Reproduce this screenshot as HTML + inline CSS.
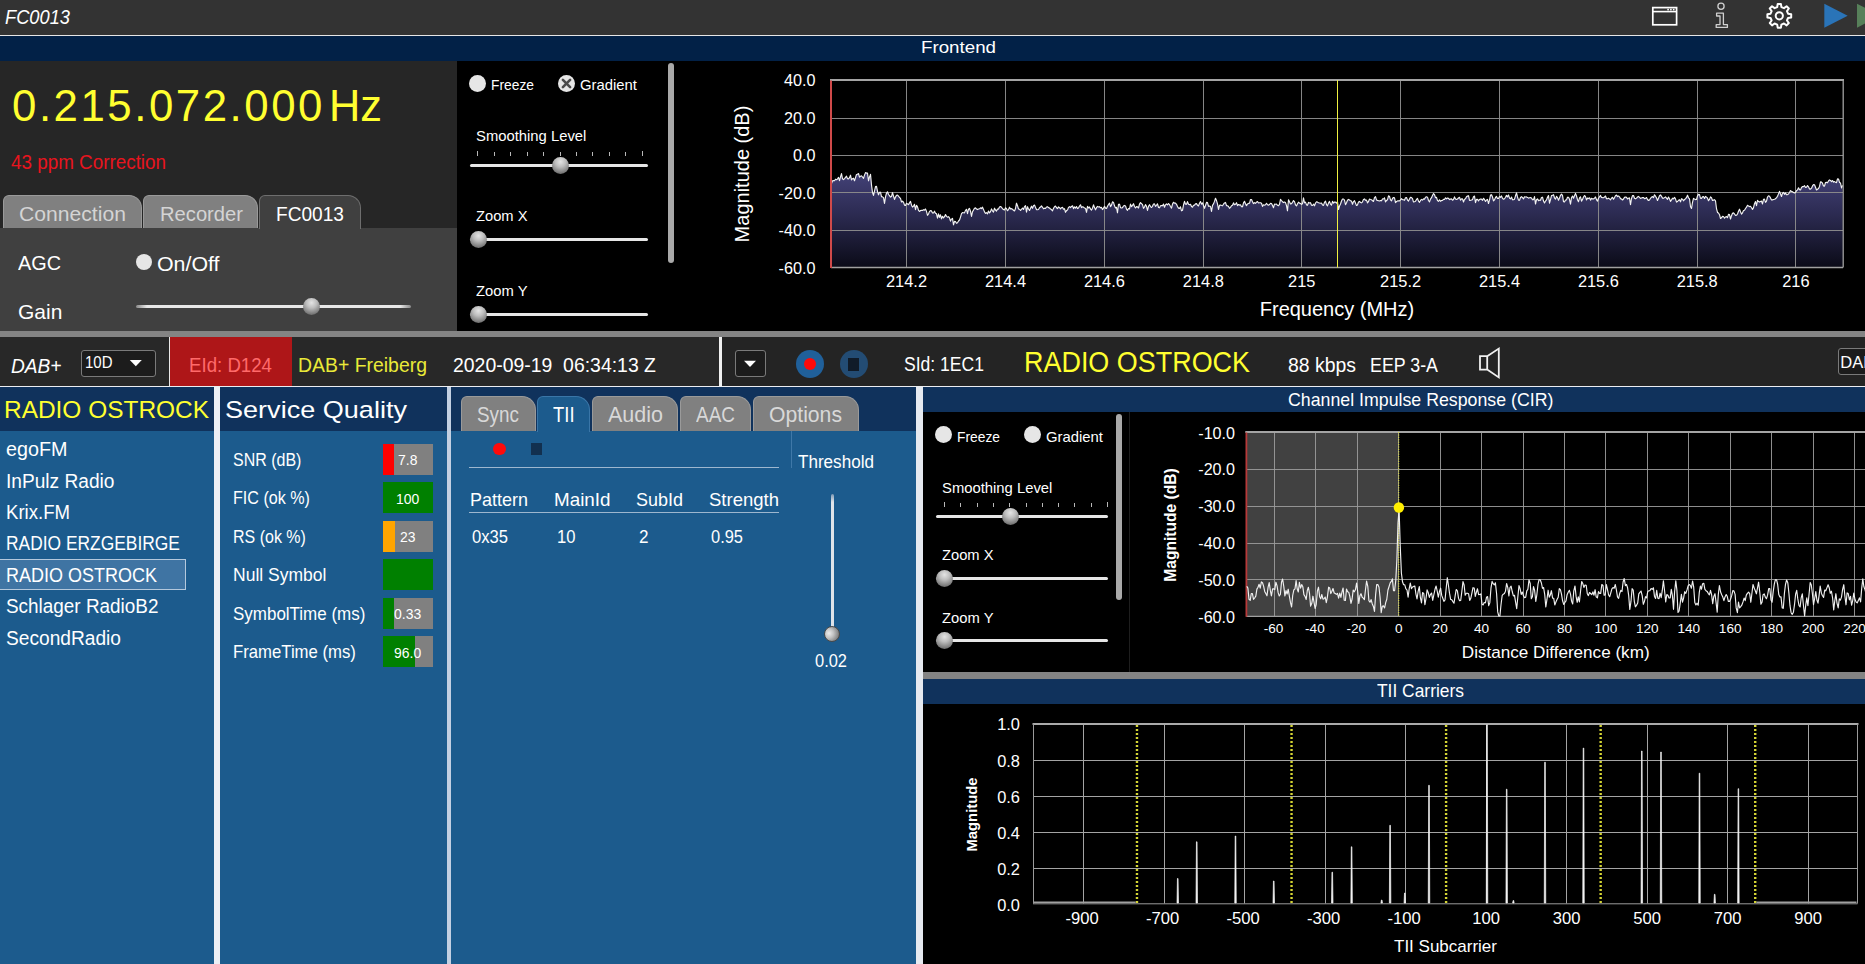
<!DOCTYPE html>
<html><head><meta charset="utf-8"><title>DAB</title>
<style>
html,body{margin:0;padding:0;background:#000;}
body{width:1865px;height:964px;overflow:hidden;position:relative;font-family:"Liberation Sans",sans-serif;}
#root{position:absolute;left:0;top:0;width:1865px;height:964px;overflow:hidden;background:#000;}
.t{position:absolute;white-space:pre;transform-origin:0 50%;display:block;}
.b{position:absolute;}
svg{position:absolute;left:0;top:0;}
svg text{font-family:"Liberation Sans",sans-serif;fill:#fff;}
.th{position:absolute;width:17px;height:17px;border-radius:50%;background:radial-gradient(circle at 50% 28%,#e4e4e4 0%,#bdbdbd 35%,#8a8a8a 65%,#4e4e4e 100%);}
.rd{position:absolute;width:17px;height:17px;border-radius:50%;background:#e6e6e6;}
</style></head><body><div id="root">
<div class="b" style="left:0.00px;top:0.00px;width:1865.00px;height:35.00px;background:#333333;"></div>
<div class="b" style="left:0.00px;top:35.00px;width:1865.00px;height:1.00px;background:#e6e6e6;"></div>
<div class="b" style="left:0.00px;top:36.00px;width:1865.00px;height:25.00px;background:#022147;"></div>
<span class="t" style="left:5.00px;top:8.47px;font-size:19.50px;line-height:19.50px;color:#fff;font-style:italic;transform:scaleX(0.9370);">FC0013</span>
<span class="t" style="left:920.50px;top:39.20px;font-size:17.00px;line-height:17.00px;color:#fff;transform:scaleX(1.1024);">Frontend</span>
<svg width="1865" height="36" viewBox="0 0 1865 36">
<g fill="none" stroke="#fff" stroke-width="1.7">
<rect x="1652.8" y="7.6" width="23.8" height="17.2"/>
<line x1="1652.7" y1="11.6" x2="1676.7" y2="11.6" stroke-width="1.6"/>
</g>
<g fill="#fff"><rect x="1667.3" y="8.8" width="1.6" height="1.6"/><rect x="1670.1" y="8.8" width="1.6" height="1.6"/><rect x="1672.9" y="8.8" width="1.6" height="1.6"/></g>
<g fill="none" stroke="#d0d0d0" stroke-width="1.3" stroke-linejoin="round">
<circle cx="1721" cy="6.3" r="3.1"/>
<path d="M1716.6 13.2 H1723.4 V24.6 H1727.4 V27.4 H1716.2 V24.6 H1720 V16 H1716.6 Z"/>
</g>
<g fill="none" stroke="#fff" stroke-width="2">
<path d="M1777.20 7.05 L1777.70 3.91 L1780.90 3.91 L1781.40 7.05 L1784.00 8.13 L1786.58 6.26 L1788.84 8.52 L1786.97 11.10 L1788.05 13.70 L1791.19 14.20 L1791.19 17.40 L1788.05 17.90 L1786.97 20.50 L1788.84 23.08 L1786.58 25.34 L1784.00 23.47 L1781.40 24.55 L1780.90 27.69 L1777.70 27.69 L1777.20 24.55 L1774.60 23.47 L1772.02 25.34 L1769.76 23.08 L1771.63 20.50 L1770.55 17.90 L1767.41 17.40 L1767.41 14.20 L1770.55 13.70 L1771.63 11.10 L1769.76 8.52 L1772.02 6.26 L1774.60 8.13 Z" stroke-linejoin="round"/>
<circle cx="1779.3" cy="15.8" r="3.6"/>
</g>
<polygon points="1824.3,3.7 1847.7,15.7 1824.3,27.7" fill="#2a74b8"/>
<polygon points="1857,3.7 1880.4,15.7 1857,27.7" fill="#57805a"/>
</svg>
<div class="b" style="left:0.00px;top:61.00px;width:457.00px;height:167.00px;background:#262626;"></div>
<div class="b" style="left:457.00px;top:61.00px;width:1408.00px;height:270.00px;background:#000;"></div>
<span class="t" style="left:11.50px;top:82.52px;font-size:45.00px;line-height:45.00px;color:#ffff30;letter-spacing:2.60px;transform:scaleX(0.9733);">0.215.072.000</span>
<span class="t" style="left:329.00px;top:82.52px;font-size:45.00px;line-height:45.00px;color:#ffff30;transform:scaleX(0.9637);">Hz</span>
<span class="t" style="left:11.00px;top:152.77px;font-size:19.50px;line-height:19.50px;color:#e8141e;transform:scaleX(0.9664);">43 ppm Correction</span>
<div class="b" style="left:3.0px;top:195.0px;width:139.0px;height:33.5px;background:#808080;border:1px solid #9a9a9a;border-bottom:none;box-sizing:border-box;border-radius:6px 13px 0 0;"></div>
<span class="t" style="left:19.40px;top:202.99px;font-size:21.00px;line-height:21.00px;color:#d4d4d4;transform:scaleX(1.0062);">Connection</span>
<div class="b" style="left:143.2px;top:195.0px;width:115.2px;height:33.5px;background:#808080;border:1px solid #9a9a9a;border-bottom:none;box-sizing:border-box;border-radius:6px 13px 0 0;"></div>
<span class="t" style="left:160.00px;top:202.99px;font-size:21.00px;line-height:21.00px;color:#d4d4d4;transform:scaleX(0.9610);">Recorder</span>
<div class="b" style="left:0.00px;top:228.00px;width:457.00px;height:103.00px;background:#404040;"></div>
<div class="b" style="left:259.4px;top:195.0px;width:101.6px;height:34.0px;background:#404040;border:1px solid #6e6e6e;border-bottom:none;box-sizing:border-box;border-radius:6px 13px 0 0;"></div>
<span class="t" style="left:276.00px;top:203.24px;font-size:21.00px;line-height:21.00px;color:#fff;transform:scaleX(0.9102);">FC0013</span>
<span class="t" style="left:18.00px;top:252.24px;font-size:21.00px;line-height:21.00px;color:#fff;transform:scaleX(0.9449);">AGC</span>
<div class="rd" style="left:135.5px;top:253.5px;width:16.5px;height:16.5px;"></div>
<span class="t" style="left:157.00px;top:253.24px;font-size:21.00px;line-height:21.00px;color:#fff;transform:scaleX(1.0166);">On/Off</span>
<span class="t" style="left:18.00px;top:300.74px;font-size:21.00px;line-height:21.00px;color:#fff;">Gain</span>
<div class="b" style="left:135.5px;top:305px;width:275px;height:2.5px;border-radius:2px;background:linear-gradient(90deg,#888,#e8e8e8 4%,#e8e8e8 96%,#888);"></div>
<div class="th" style="left:303.2px;top:297.7px;"></div>
<div class="rd" style="left:469.0px;top:75.0px;"></div>
<span class="t" style="left:490.50px;top:77.27px;font-size:15.00px;line-height:15.00px;color:#fff;transform:scaleX(0.9209);">Freeze</span>
<div class="rd" style="left:558.0px;top:75.0px;"></div>
<svg width="1865" height="964" style="pointer-events:none"><g stroke="#4a4a4a" stroke-width="2.6" stroke-linecap="round"><line x1="562.9" y1="79.9" x2="570.1" y2="87.1"/><line x1="562.9" y1="87.1" x2="570.1" y2="79.9"/></g></svg>
<span class="t" style="left:579.80px;top:77.27px;font-size:15.00px;line-height:15.00px;color:#fff;transform:scaleX(0.9906);">Gradient</span>
<span class="t" style="left:475.60px;top:128.37px;font-size:15.00px;line-height:15.00px;color:#fff;transform:scaleX(0.9879);">Smoothing Level</span>
<div class="b" style="left:477.20px;top:151.00px;width:1.00px;height:5.00px;background:#b8b8b8;"></div>
<div class="b" style="left:493.67px;top:152.00px;width:1.00px;height:4.00px;background:#b8b8b8;"></div>
<div class="b" style="left:510.14px;top:152.00px;width:1.00px;height:4.00px;background:#b8b8b8;"></div>
<div class="b" style="left:526.61px;top:152.00px;width:1.00px;height:4.00px;background:#b8b8b8;"></div>
<div class="b" style="left:543.08px;top:152.00px;width:1.00px;height:4.00px;background:#b8b8b8;"></div>
<div class="b" style="left:559.55px;top:152.00px;width:1.00px;height:4.00px;background:#b8b8b8;"></div>
<div class="b" style="left:576.02px;top:152.00px;width:1.00px;height:4.00px;background:#b8b8b8;"></div>
<div class="b" style="left:592.49px;top:152.00px;width:1.00px;height:4.00px;background:#b8b8b8;"></div>
<div class="b" style="left:608.96px;top:152.00px;width:1.00px;height:4.00px;background:#b8b8b8;"></div>
<div class="b" style="left:625.43px;top:152.00px;width:1.00px;height:4.00px;background:#b8b8b8;"></div>
<div class="b" style="left:641.90px;top:151.00px;width:1.00px;height:5.00px;background:#b8b8b8;"></div>
<div class="b" style="left:469.7px;top:163.5px;width:178.5px;height:3px;border-radius:2px;background:#e6e6e6;"></div>
<div class="th" style="left:551.5px;top:156.7px;"></div>
<span class="t" style="left:475.60px;top:208.27px;font-size:15.00px;line-height:15.00px;color:#fff;transform:scaleX(0.9806);">Zoom X</span>
<div class="b" style="left:469.7px;top:238.2px;width:178.5px;height:3px;border-radius:2px;background:#e6e6e6;"></div>
<div class="th" style="left:469.7px;top:231.4px;"></div>
<span class="t" style="left:475.60px;top:283.27px;font-size:15.00px;line-height:15.00px;color:#fff;transform:scaleX(0.9856);">Zoom Y</span>
<div class="b" style="left:469.7px;top:312.8px;width:178.5px;height:3px;border-radius:2px;background:#e6e6e6;"></div>
<div class="th" style="left:469.7px;top:306.0px;"></div>
<div class="b" style="left:668.2px;top:62.5px;width:6.2px;height:200px;border-radius:3px;background:#a9a9a9;"></div>
<div class="b" style="left:0.00px;top:331.00px;width:1865.00px;height:6.30px;background:#848484;"></div>
<div class="b" style="left:0.00px;top:337.30px;width:719.00px;height:48.70px;background:#282828;"></div>
<div class="b" style="left:719.00px;top:337.30px;width:3.00px;height:48.70px;background:#f0f0f0;"></div>
<div class="b" style="left:722.00px;top:337.30px;width:1143.00px;height:48.70px;background:#242424;"></div>
<div class="b" style="left:0.00px;top:386.00px;width:1865.00px;height:1.00px;background:#eceef2;"></div>
<span class="t" style="left:10.50px;top:355.53px;font-size:20.00px;line-height:20.00px;color:#fff;font-style:italic;transform:scaleX(0.9564);">DAB+</span>
<div class="b" style="left:81px;top:350px;width:74.7px;height:26.7px;box-sizing:border-box;border:1px solid #7a7a7a;border-radius:3px;background:#1c1c1c;"></div>
<span class="t" style="left:85.00px;top:355.18px;font-size:16.00px;line-height:16.00px;color:#fff;transform:scaleX(0.9369);">10D</span>
<div class="b" style="left:169.30px;top:337.30px;width:1.00px;height:48.70px;background:#e8e8e8;"></div>
<div class="b" style="left:170.30px;top:337.30px;width:121.70px;height:48.70px;background:#ae1618;"></div>
<span class="t" style="left:189.00px;top:354.53px;font-size:20.00px;line-height:20.00px;color:#ff6a6a;transform:scaleX(0.9330);">EId: D124</span>
<span class="t" style="left:298.00px;top:354.53px;font-size:20.00px;line-height:20.00px;color:#eaea38;transform:scaleX(0.9710);">DAB+ Freiberg</span>
<span class="t" style="left:452.50px;top:354.53px;font-size:20.00px;line-height:20.00px;color:#fff;transform:scaleX(0.9709);">2020-09-19  06:34:13 Z</span>
<div class="b" style="left:735px;top:350px;width:31px;height:26.7px;box-sizing:border-box;border:1px solid #7a7a7a;border-radius:3px;background:#1c1c1c;"></div>
<svg width="1865" height="964"><polygon points="129.8,360 141.8,360 135.8,366.3" fill="#fff"/><polygon points="744,360.7 756,360.7 750,367" fill="#fff"/></svg>
<div class="b" style="left:795.8px;top:350px;width:28.4px;height:28.4px;border-radius:50%;background:#20609a;"></div>
<div class="b" style="left:803.8px;top:358px;width:12.4px;height:12.4px;border-radius:50%;background:#ff0a0a;"></div>
<div class="b" style="left:839.6px;top:350px;width:28.4px;height:28.4px;border-radius:50%;background:#234c74;"></div>
<div class="b" style="left:848.20px;top:357.60px;width:11.20px;height:13.20px;background:#101b29;"></div>
<span class="t" style="left:904.00px;top:354.23px;font-size:20.00px;line-height:20.00px;color:#fff;transform:scaleX(0.8774);">SId: 1EC1</span>
<span class="t" style="left:1024.00px;top:346.59px;font-size:29.50px;line-height:29.50px;color:#ffff30;transform:scaleX(0.9132);">RADIO OSTROCK</span>
<span class="t" style="left:1288.00px;top:354.63px;font-size:20.00px;line-height:20.00px;color:#fff;transform:scaleX(0.9706);">88 kbps</span>
<span class="t" style="left:1370.00px;top:354.63px;font-size:20.00px;line-height:20.00px;color:#fff;transform:scaleX(0.8907);">EEP 3-A</span>
<svg width="1865" height="964"><path d="M1480 356.2 H1487.2 V369.6 H1480 Z M1487.2 356.2 L1498.8 348.6 V377.4 L1487.2 369.6" fill="none" stroke="#f0f0f0" stroke-width="1.8" stroke-linejoin="miter"/></svg>
<div class="b" style="left:1837.6px;top:348px;width:40px;height:26.7px;box-sizing:border-box;border:1px solid #7a7a7a;border-radius:3px;background:#1c1c1c;"></div>
<span class="t" style="left:1840.30px;top:353.54px;font-size:16.50px;line-height:16.50px;color:#fff;">DAB</span>
<div class="b" style="left:0.00px;top:387.00px;width:213.70px;height:577.00px;background:#1c5b8d;"></div>
<div class="b" style="left:0.00px;top:387.00px;width:213.70px;height:43.50px;background:#10325c;"></div>
<div class="b" style="left:213.80px;top:387.00px;width:6.50px;height:577.00px;background:#eceff5;"></div>
<span class="t" style="left:3.50px;top:397.53px;font-size:24.30px;line-height:24.30px;color:#ffff30;transform:scaleX(1.0055);">RADIO OSTROCK</span>
<span class="t" style="left:6.00px;top:440.13px;font-size:19.60px;line-height:19.60px;color:#fff;transform:scaleX(1.0083);">egoFM</span>
<span class="t" style="left:6.00px;top:471.58px;font-size:19.60px;line-height:19.60px;color:#fff;transform:scaleX(0.9764);">InPulz Radio</span>
<span class="t" style="left:6.00px;top:503.03px;font-size:19.60px;line-height:19.60px;color:#fff;transform:scaleX(0.9482);">Krix.FM</span>
<span class="t" style="left:6.00px;top:534.48px;font-size:19.60px;line-height:19.60px;color:#fff;transform:scaleX(0.8876);">RADIO ERZGEBIRGE</span>
<div class="b" style="left:-1px;top:558.7px;width:186.5px;height:31px;box-sizing:border-box;border:1px solid #b4c8dc;background:#3f74a3;"></div>
<span class="t" style="left:6.00px;top:565.93px;font-size:19.60px;line-height:19.60px;color:#fff;transform:scaleX(0.9183);">RADIO OSTROCK</span>
<span class="t" style="left:6.00px;top:597.38px;font-size:19.60px;line-height:19.60px;color:#fff;transform:scaleX(0.9653);">Schlager RadioB2</span>
<span class="t" style="left:6.00px;top:628.83px;font-size:19.60px;line-height:19.60px;color:#fff;transform:scaleX(0.9772);">SecondRadio</span>
<div class="b" style="left:220.00px;top:387.00px;width:227.00px;height:577.00px;background:#1c5b8d;"></div>
<div class="b" style="left:220.00px;top:387.00px;width:227.00px;height:43.50px;background:#10325c;"></div>
<div class="b" style="left:447.00px;top:387.00px;width:4.30px;height:577.00px;background:#c3d0e2;"></div>
<span class="t" style="left:225.00px;top:397.53px;font-size:24.30px;line-height:24.30px;color:#fff;transform:scaleX(1.1137);">Service Quality</span>
<span class="t" style="left:233.00px;top:451.60px;font-size:17.80px;line-height:17.80px;color:#fff;transform:scaleX(0.8995);">SNR (dB)</span>
<div class="b" style="left:383.00px;top:443.80px;width:50.00px;height:31.00px;background:#808080;"></div>
<div class="b" style="left:383.00px;top:443.80px;width:11.00px;height:31.00px;background:#ff0000;"></div>
<span class="t" style="left:398.30px;top:452.47px;font-size:15.00px;line-height:15.00px;color:#fff;transform:scaleX(0.9300);">7.8</span>
<span class="t" style="left:233.00px;top:490.10px;font-size:17.80px;line-height:17.80px;color:#fff;transform:scaleX(0.9055);">FIC (ok %)</span>
<div class="b" style="left:383.00px;top:482.25px;width:50.00px;height:31.00px;background:#808080;"></div>
<div class="b" style="left:383.00px;top:482.25px;width:50.00px;height:31.00px;background:#008000;"></div>
<span class="t" style="left:396.36px;top:490.97px;font-size:15.00px;line-height:15.00px;color:#fff;transform:scaleX(0.9300);">100</span>
<span class="t" style="left:233.00px;top:528.60px;font-size:17.80px;line-height:17.80px;color:#fff;transform:scaleX(0.9002);">RS (ok %)</span>
<div class="b" style="left:383.00px;top:520.70px;width:50.00px;height:31.00px;background:#808080;"></div>
<div class="b" style="left:383.00px;top:520.70px;width:12.00px;height:31.00px;background:#ffa500;"></div>
<span class="t" style="left:400.24px;top:529.47px;font-size:15.00px;line-height:15.00px;color:#fff;transform:scaleX(0.9300);">23</span>
<span class="t" style="left:233.00px;top:567.10px;font-size:17.80px;line-height:17.80px;color:#fff;transform:scaleX(0.9846);">Null Symbol</span>
<div class="b" style="left:383.00px;top:559.15px;width:50.00px;height:31.00px;background:#808080;"></div>
<div class="b" style="left:383.00px;top:559.15px;width:50.00px;height:31.00px;background:#008000;"></div>
<span class="t" style="left:233.00px;top:605.60px;font-size:17.80px;line-height:17.80px;color:#fff;transform:scaleX(0.9548);">SymbolTime (ms)</span>
<div class="b" style="left:383.00px;top:597.60px;width:50.00px;height:31.00px;background:#808080;"></div>
<div class="b" style="left:383.00px;top:597.60px;width:11.00px;height:31.00px;background:#008000;"></div>
<span class="t" style="left:394.42px;top:606.47px;font-size:15.00px;line-height:15.00px;color:#fff;transform:scaleX(0.9300);">0.33</span>
<span class="t" style="left:233.00px;top:644.10px;font-size:17.80px;line-height:17.80px;color:#fff;transform:scaleX(0.9401);">FrameTime (ms)</span>
<div class="b" style="left:383.00px;top:636.05px;width:50.00px;height:31.00px;background:#808080;"></div>
<div class="b" style="left:383.00px;top:636.05px;width:32.00px;height:31.00px;background:#008000;"></div>
<span class="t" style="left:394.42px;top:644.97px;font-size:15.00px;line-height:15.00px;color:#fff;transform:scaleX(0.9300);">96.0</span>
<div class="b" style="left:451.30px;top:387.00px;width:464.70px;height:577.00px;background:#1c5b8d;"></div>
<div class="b" style="left:451.30px;top:387.00px;width:464.70px;height:44.00px;background:#10325c;"></div>
<div class="b" style="left:916.00px;top:387.00px;width:7.00px;height:577.00px;background:#e6eaf0;"></div>
<div class="b" style="left:461.0px;top:396px;width:74.5px;height:35.0px;background:#808080;border:1px solid #9a9a9a;border-bottom:none;box-sizing:border-box;border-radius:6px 14px 0 0;"></div>
<span class="t" style="left:477.00px;top:404.35px;font-size:21.80px;line-height:21.80px;color:#d8d8d8;transform:scaleX(0.8666);">Sync</span>
<div class="b" style="left:591.5px;top:396px;width:86.0px;height:35.0px;background:#808080;border:1px solid #9a9a9a;border-bottom:none;box-sizing:border-box;border-radius:6px 14px 0 0;"></div>
<span class="t" style="left:607.50px;top:404.35px;font-size:21.80px;line-height:21.80px;color:#d8d8d8;transform:scaleX(0.9864);">Audio</span>
<div class="b" style="left:679.5px;top:396px;width:71.0px;height:35.0px;background:#808080;border:1px solid #9a9a9a;border-bottom:none;box-sizing:border-box;border-radius:6px 14px 0 0;"></div>
<span class="t" style="left:696.00px;top:404.35px;font-size:21.80px;line-height:21.80px;color:#d8d8d8;transform:scaleX(0.8700);">AAC</span>
<div class="b" style="left:752.5px;top:396px;width:106.2px;height:35.0px;background:#808080;border:1px solid #9a9a9a;border-bottom:none;box-sizing:border-box;border-radius:6px 14px 0 0;"></div>
<span class="t" style="left:769.00px;top:404.35px;font-size:21.80px;line-height:21.80px;color:#d8d8d8;transform:scaleX(0.9716);">Options</span>
<div class="b" style="left:537.0px;top:396px;width:53.0px;height:35.5px;background:#1c5b8d;border:1px solid #3a76a8;border-bottom:none;box-sizing:border-box;border-radius:6px 14px 0 0;"></div>
<span class="t" style="left:552.50px;top:404.35px;font-size:21.80px;line-height:21.80px;color:#fff;transform:scaleX(0.8455);">TII</span>
<div class="b" style="left:493.3px;top:442.6px;width:12.4px;height:12.4px;border-radius:50%;background:#ff0a0a;"></div>
<div class="b" style="left:531.20px;top:443.00px;width:10.80px;height:12.00px;background:#12304f;"></div>
<div class="b" style="left:469.00px;top:467.00px;width:310.00px;height:1.00px;background:#9db7cf;"></div>
<div class="b" style="left:790.50px;top:431.00px;width:1.00px;height:37.00px;background:#3f78a8;"></div>
<span class="t" style="left:798.00px;top:453.06px;font-size:18.30px;line-height:18.30px;color:#fff;transform:scaleX(0.9340);">Threshold</span>
<span class="t" style="left:470.00px;top:491.41px;font-size:18.60px;line-height:18.60px;color:#fff;transform:scaleX(0.9671);">Pattern</span>
<span class="t" style="left:554.00px;top:491.41px;font-size:18.60px;line-height:18.60px;color:#fff;transform:scaleX(1.0120);">MainId</span>
<span class="t" style="left:636.00px;top:491.41px;font-size:18.60px;line-height:18.60px;color:#fff;transform:scaleX(0.9669);">SubId</span>
<span class="t" style="left:709.00px;top:491.41px;font-size:18.60px;line-height:18.60px;color:#fff;transform:scaleX(0.9955);">Strength</span>
<div class="b" style="left:469.00px;top:512.20px;width:310.00px;height:1.00px;background:#9db7cf;"></div>
<span class="t" style="left:472.00px;top:528.90px;font-size:17.60px;line-height:17.60px;color:#fff;transform:scaleX(0.9431);">0x35</span>
<span class="t" style="left:557.00px;top:528.90px;font-size:17.60px;line-height:17.60px;color:#fff;transform:scaleX(0.9448);">10</span>
<span class="t" style="left:639.00px;top:528.90px;font-size:17.60px;line-height:17.60px;color:#fff;transform:scaleX(0.9704);">2</span>
<span class="t" style="left:711.00px;top:528.90px;font-size:17.60px;line-height:17.60px;color:#fff;transform:scaleX(0.9340);">0.95</span>
<div class="b" style="left:831.3px;top:493.5px;width:2.6px;height:135px;border-radius:2px;background:linear-gradient(180deg,#7f9ab5,#dfe3e8 6%,#dfe3e8);"></div>
<div class="th" style="left:824.3px;top:626px;width:16px;height:16px;box-sizing:border-box;border:1px solid #4a4a4a;background:radial-gradient(circle at 28% 45%,#ececec 0%,#c4c4c4 35%,#8c8c8c 70%,#5a5a5a 100%);"></div>
<span class="t" style="left:815.30px;top:652.90px;font-size:17.60px;line-height:17.60px;color:#fff;transform:scaleX(0.9340);">0.02</span>
<div class="b" style="left:923.00px;top:387.00px;width:942.00px;height:25.00px;background:#10325c;"></div>
<div class="b" style="left:923.00px;top:412.00px;width:942.00px;height:260.50px;background:#000;"></div>
<span class="t" style="left:1287.55px;top:391.01px;font-size:18.40px;line-height:18.40px;color:#fff;transform:scaleX(0.9651);">Channel Impulse Response (CIR)</span>
<div class="rd" style="left:935.3px;top:426.4px;"></div>
<span class="t" style="left:956.80px;top:428.67px;font-size:15.00px;line-height:15.00px;color:#fff;transform:scaleX(0.9209);">Freeze</span>
<div class="rd" style="left:1024.3px;top:426.4px;"></div>
<span class="t" style="left:1046.10px;top:428.67px;font-size:15.00px;line-height:15.00px;color:#fff;transform:scaleX(0.9906);">Gradient</span>
<span class="t" style="left:941.90px;top:479.77px;font-size:15.00px;line-height:15.00px;color:#fff;transform:scaleX(0.9879);">Smoothing Level</span>
<div class="b" style="left:944.00px;top:502.40px;width:1.00px;height:5.00px;background:#b8b8b8;"></div>
<div class="b" style="left:960.30px;top:503.40px;width:1.00px;height:4.00px;background:#b8b8b8;"></div>
<div class="b" style="left:976.60px;top:503.40px;width:1.00px;height:4.00px;background:#b8b8b8;"></div>
<div class="b" style="left:992.90px;top:503.40px;width:1.00px;height:4.00px;background:#b8b8b8;"></div>
<div class="b" style="left:1009.20px;top:503.40px;width:1.00px;height:4.00px;background:#b8b8b8;"></div>
<div class="b" style="left:1025.50px;top:503.40px;width:1.00px;height:4.00px;background:#b8b8b8;"></div>
<div class="b" style="left:1041.80px;top:503.40px;width:1.00px;height:4.00px;background:#b8b8b8;"></div>
<div class="b" style="left:1058.10px;top:503.40px;width:1.00px;height:4.00px;background:#b8b8b8;"></div>
<div class="b" style="left:1074.40px;top:503.40px;width:1.00px;height:4.00px;background:#b8b8b8;"></div>
<div class="b" style="left:1090.70px;top:503.40px;width:1.00px;height:4.00px;background:#b8b8b8;"></div>
<div class="b" style="left:1107.00px;top:502.40px;width:1.00px;height:5.00px;background:#b8b8b8;"></div>
<div class="b" style="left:936.0px;top:514.9px;width:172.2px;height:3px;border-radius:2px;background:#e6e6e6;"></div>
<div class="th" style="left:1001.5px;top:508.1px;"></div>
<span class="t" style="left:941.90px;top:547.27px;font-size:15.00px;line-height:15.00px;color:#fff;transform:scaleX(0.9806);">Zoom X</span>
<div class="b" style="left:936.0px;top:577.2px;width:172.2px;height:3px;border-radius:2px;background:#e6e6e6;"></div>
<div class="th" style="left:936.0px;top:570.4px;"></div>
<span class="t" style="left:941.90px;top:609.67px;font-size:15.00px;line-height:15.00px;color:#fff;transform:scaleX(0.9856);">Zoom Y</span>
<div class="b" style="left:936.0px;top:639.2px;width:172.2px;height:3px;border-radius:2px;background:#e6e6e6;"></div>
<div class="th" style="left:936.0px;top:632.4px;"></div>
<div class="b" style="left:1115.8px;top:414px;width:6.2px;height:186px;border-radius:3px;background:#a9a9a9;"></div>
<div class="b" style="left:1129.00px;top:412.00px;width:1.00px;height:260.00px;background:#1e1e1e;"></div>
<div class="b" style="left:923.00px;top:672.30px;width:942.00px;height:6.40px;background:#848484;"></div>
<div class="b" style="left:923.00px;top:678.70px;width:942.00px;height:25.00px;background:#10325c;"></div>
<div class="b" style="left:923.00px;top:703.70px;width:942.00px;height:261.00px;background:#000;"></div>
<span class="t" style="left:1376.80px;top:681.51px;font-size:18.40px;line-height:18.40px;color:#fff;transform:scaleX(0.9457);">TII Carriers</span>
<svg width="1865" height="964" viewBox="0 0 1865 964" shape-rendering="auto">
<defs><linearGradient id="fg" x1="0" y1="0" x2="0" y2="1" gradientUnits="userSpaceOnUse"><stop offset="0" stop-color="#000"/></linearGradient><linearGradient id="sp" gradientUnits="userSpaceOnUse" x1="0" y1="170" x2="0" y2="267"><stop offset="0" stop-color="#45437a"/><stop offset="0.45" stop-color="#2c2b52"/><stop offset="1" stop-color="#0b0b18"/></linearGradient><clipPath id="c2"><rect x="1246" y="432" width="640" height="185"/></clipPath></defs>
<polygon points="831.0,267.5 831.5,183.5 832.5,180.9 833.5,180.6 834.5,180.7 835.5,179.2 836.5,179.7 837.5,179.0 838.5,177.4 839.5,180.7 840.5,176.9 841.5,173.6 842.5,178.8 843.5,179.6 844.5,178.6 845.5,177.3 846.5,176.2 847.5,178.6 848.5,178.9 849.5,177.7 850.5,175.2 851.5,179.9 852.5,178.7 853.5,178.2 854.5,180.7 855.5,177.6 856.5,174.5 857.5,174.3 858.5,173.5 859.5,177.1 860.5,176.2 861.5,175.8 862.5,177.0 863.5,178.3 864.5,175.1 865.5,172.6 866.5,173.1 867.5,173.1 868.5,180.8 869.5,176.9 870.5,174.4 871.5,185.1 872.5,192.5 873.5,195.4 874.5,191.1 875.5,186.6 876.5,186.3 877.5,191.3 878.5,194.8 879.5,192.3 880.5,192.2 881.5,196.7 882.5,196.9 883.5,197.6 884.5,203.4 885.5,196.9 886.5,193.2 887.5,191.8 888.5,194.5 889.5,195.7 890.5,197.1 891.5,196.6 892.5,192.5 893.5,196.1 894.5,199.4 895.5,197.1 896.5,195.3 897.5,195.1 898.5,196.1 899.5,197.5 900.5,198.4 901.5,202.0 902.5,201.2 903.5,202.1 904.5,205.1 905.5,205.5 906.5,203.3 907.5,203.9 908.5,204.7 909.5,202.9 910.5,201.4 911.5,205.2 912.5,207.1 913.5,206.1 914.5,204.3 915.5,209.6 916.5,205.3 917.5,206.9 918.5,210.3 919.5,211.5 920.5,210.5 921.5,210.3 922.5,210.5 923.5,209.7 924.5,210.1 925.5,209.0 926.5,211.4 927.5,215.3 928.5,214.0 929.5,211.4 930.5,210.6 931.5,210.9 932.5,213.0 933.5,213.0 934.5,211.2 935.5,213.2 936.5,213.8 937.5,218.2 938.5,213.9 939.5,217.3 940.5,214.8 941.5,218.8 942.5,216.3 943.5,217.9 944.5,216.7 945.5,214.6 946.5,216.4 947.5,217.1 948.5,216.7 949.5,217.9 950.5,221.1 951.5,219.1 952.5,218.4 953.5,224.8 954.5,221.3 955.5,221.6 956.5,223.3 957.5,222.7 958.5,221.0 959.5,220.0 960.5,217.1 961.5,213.7 962.5,212.6 963.5,212.7 964.5,212.9 965.5,210.4 966.5,209.3 967.5,213.7 968.5,209.2 969.5,208.4 970.5,211.2 971.5,216.5 972.5,211.7 973.5,210.1 974.5,208.2 975.5,207.9 976.5,209.1 977.5,209.6 978.5,209.0 979.5,208.8 980.5,207.8 981.5,208.6 982.5,207.2 983.5,209.4 984.5,211.9 985.5,213.4 986.5,212.7 987.5,213.8 988.5,211.0 989.5,212.9 990.5,211.6 991.5,208.9 992.5,210.8 993.5,212.1 994.5,208.2 995.5,210.0 996.5,211.1 997.5,209.0 998.5,209.1 999.5,207.1 1000.5,206.5 1001.5,207.2 1002.5,208.8 1003.5,209.4 1004.5,210.0 1005.5,207.8 1006.5,208.7 1007.5,210.7 1008.5,209.6 1009.5,207.2 1010.5,208.9 1011.5,208.6 1012.5,209.3 1013.5,210.2 1014.5,211.0 1015.5,208.5 1016.5,203.2 1017.5,205.7 1018.5,209.0 1019.5,209.2 1020.5,210.5 1021.5,209.3 1022.5,208.0 1023.5,209.5 1024.5,206.6 1025.5,205.7 1026.5,212.2 1027.5,206.7 1028.5,209.0 1029.5,210.5 1030.5,208.2 1031.5,206.2 1032.5,208.3 1033.5,205.7 1034.5,205.0 1035.5,207.4 1036.5,209.6 1037.5,209.7 1038.5,209.5 1039.5,207.8 1040.5,207.0 1041.5,205.9 1042.5,207.3 1043.5,208.8 1044.5,208.2 1045.5,208.4 1046.5,207.0 1047.5,206.7 1048.5,207.6 1049.5,208.0 1050.5,209.0 1051.5,209.6 1052.5,210.9 1053.5,208.4 1054.5,206.8 1055.5,206.0 1056.5,207.7 1057.5,208.6 1058.5,206.9 1059.5,207.7 1060.5,208.9 1061.5,207.7 1062.5,207.3 1063.5,209.2 1064.5,208.7 1065.5,212.3 1066.5,210.6 1067.5,210.1 1068.5,207.4 1069.5,206.7 1070.5,207.7 1071.5,206.4 1072.5,205.8 1073.5,208.6 1074.5,206.9 1075.5,208.1 1076.5,206.6 1077.5,208.6 1078.5,208.1 1079.5,206.1 1080.5,204.8 1081.5,207.6 1082.5,206.8 1083.5,207.1 1084.5,208.0 1085.5,208.2 1086.5,212.3 1087.5,206.4 1088.5,208.0 1089.5,207.0 1090.5,209.0 1091.5,210.1 1092.5,208.2 1093.5,204.8 1094.5,207.6 1095.5,209.8 1096.5,207.7 1097.5,206.4 1098.5,207.0 1099.5,206.7 1100.5,207.8 1101.5,207.4 1102.5,209.6 1103.5,208.2 1104.5,206.3 1105.5,208.1 1106.5,208.5 1107.5,206.2 1108.5,204.5 1109.5,203.2 1110.5,206.7 1111.5,205.1 1112.5,201.8 1113.5,202.4 1114.5,205.8 1115.5,207.9 1116.5,207.3 1117.5,212.8 1118.5,204.3 1119.5,204.2 1120.5,207.7 1121.5,208.0 1122.5,207.6 1123.5,206.0 1124.5,205.4 1125.5,205.9 1126.5,209.1 1127.5,210.3 1128.5,208.5 1129.5,209.0 1130.5,204.1 1131.5,206.6 1132.5,205.4 1133.5,203.7 1134.5,206.5 1135.5,208.0 1136.5,206.6 1137.5,206.9 1138.5,208.0 1139.5,204.1 1140.5,202.6 1141.5,203.6 1142.5,204.6 1143.5,208.3 1144.5,207.0 1145.5,204.6 1146.5,206.3 1147.5,210.4 1148.5,206.3 1149.5,204.7 1150.5,206.6 1151.5,207.5 1152.5,206.3 1153.5,204.0 1154.5,203.9 1155.5,206.4 1156.5,205.3 1157.5,203.8 1158.5,207.5 1159.5,207.8 1160.5,205.8 1161.5,205.5 1162.5,205.8 1163.5,204.1 1164.5,207.2 1165.5,204.8 1166.5,203.8 1167.5,204.8 1168.5,203.5 1169.5,204.7 1170.5,206.5 1171.5,208.1 1172.5,204.1 1173.5,202.3 1174.5,203.1 1175.5,203.1 1176.5,204.3 1177.5,206.5 1178.5,208.1 1179.5,208.5 1180.5,206.8 1181.5,210.8 1182.5,210.3 1183.5,205.0 1184.5,201.4 1185.5,204.1 1186.5,204.3 1187.5,201.6 1188.5,204.2 1189.5,204.7 1190.5,204.3 1191.5,206.6 1192.5,207.2 1193.5,205.2 1194.5,205.1 1195.5,203.9 1196.5,203.6 1197.5,205.3 1198.5,205.9 1199.5,203.3 1200.5,201.5 1201.5,204.1 1202.5,202.9 1203.5,205.5 1204.5,208.3 1205.5,205.5 1206.5,202.3 1207.5,202.6 1208.5,206.3 1209.5,206.0 1210.5,206.5 1211.5,211.5 1212.5,205.3 1213.5,203.9 1214.5,201.4 1215.5,198.3 1216.5,200.6 1217.5,203.9 1218.5,209.5 1219.5,205.4 1220.5,205.0 1221.5,205.5 1222.5,205.8 1223.5,204.2 1224.5,202.9 1225.5,202.4 1226.5,205.6 1227.5,205.7 1228.5,206.5 1229.5,208.3 1230.5,207.4 1231.5,205.7 1232.5,205.2 1233.5,202.9 1234.5,204.7 1235.5,204.2 1236.5,202.7 1237.5,205.6 1238.5,204.5 1239.5,205.1 1240.5,204.8 1241.5,206.7 1242.5,206.8 1243.5,202.9 1244.5,201.3 1245.5,203.8 1246.5,205.6 1247.5,203.9 1248.5,203.4 1249.5,203.3 1250.5,199.5 1251.5,199.5 1252.5,201.8 1253.5,203.6 1254.5,202.6 1255.5,203.4 1256.5,202.2 1257.5,201.5 1258.5,203.0 1259.5,202.8 1260.5,202.7 1261.5,203.3 1262.5,206.4 1263.5,204.8 1264.5,205.2 1265.5,204.8 1266.5,203.3 1267.5,204.8 1268.5,205.2 1269.5,204.5 1270.5,203.3 1271.5,203.5 1272.5,205.4 1273.5,207.7 1274.5,204.1 1275.5,204.2 1276.5,204.0 1277.5,205.3 1278.5,205.7 1279.5,204.3 1280.5,199.3 1281.5,200.6 1282.5,201.7 1283.5,202.6 1284.5,202.1 1285.5,202.6 1286.5,205.6 1287.5,210.8 1288.5,199.8 1289.5,201.7 1290.5,204.0 1291.5,203.6 1292.5,202.3 1293.5,200.6 1294.5,201.6 1295.5,204.9 1296.5,205.9 1297.5,203.8 1298.5,202.2 1299.5,203.1 1300.5,203.5 1301.5,204.4 1302.5,203.7 1303.5,197.9 1304.5,202.8 1305.5,202.1 1306.5,204.9 1307.5,205.3 1308.5,202.4 1309.5,203.0 1310.5,202.7 1311.5,205.3 1312.5,205.5 1313.5,204.2 1314.5,205.8 1315.5,203.0 1316.5,201.8 1317.5,202.1 1318.5,202.8 1319.5,203.0 1320.5,203.2 1321.5,203.0 1322.5,205.0 1323.5,205.4 1324.5,202.4 1325.5,201.2 1326.5,204.6 1327.5,205.8 1328.5,203.1 1329.5,201.4 1330.5,204.1 1331.5,205.2 1332.5,201.4 1333.5,203.1 1334.5,202.0 1335.5,202.1 1336.5,203.1 1337.5,201.7 1338.5,209.5 1339.5,206.0 1340.5,204.0 1341.5,201.0 1342.5,199.0 1343.5,199.0 1344.5,200.2 1345.5,204.6 1346.5,202.8 1347.5,200.2 1348.5,199.4 1349.5,200.0 1350.5,200.7 1351.5,201.1 1352.5,204.2 1353.5,201.6 1354.5,200.7 1355.5,203.1 1356.5,205.5 1357.5,204.9 1358.5,202.0 1359.5,201.4 1360.5,202.5 1361.5,202.8 1362.5,201.8 1363.5,199.4 1364.5,198.9 1365.5,200.3 1366.5,200.1 1367.5,202.9 1368.5,201.4 1369.5,199.1 1370.5,199.5 1371.5,199.7 1372.5,200.8 1373.5,201.4 1374.5,197.6 1375.5,196.7 1376.5,199.9 1377.5,200.4 1378.5,200.7 1379.5,201.0 1380.5,200.5 1381.5,200.8 1382.5,198.9 1383.5,199.0 1384.5,197.8 1385.5,201.9 1386.5,200.4 1387.5,199.8 1388.5,195.8 1389.5,196.5 1390.5,199.8 1391.5,200.8 1392.5,198.5 1393.5,197.5 1394.5,197.9 1395.5,202.6 1396.5,201.5 1397.5,200.9 1398.5,200.8 1399.5,200.9 1400.5,199.9 1401.5,198.7 1402.5,199.6 1403.5,199.8 1404.5,200.3 1405.5,197.7 1406.5,197.5 1407.5,200.1 1408.5,201.1 1409.5,199.1 1410.5,197.3 1411.5,197.6 1412.5,198.7 1413.5,202.0 1414.5,201.8 1415.5,201.3 1416.5,199.4 1417.5,198.4 1418.5,201.1 1419.5,202.3 1420.5,200.4 1421.5,199.4 1422.5,200.1 1423.5,198.9 1424.5,199.2 1425.5,197.2 1426.5,196.8 1427.5,197.2 1428.5,200.5 1429.5,201.8 1430.5,199.1 1431.5,197.7 1432.5,195.5 1433.5,193.6 1434.5,194.7 1435.5,197.6 1436.5,197.4 1437.5,200.6 1438.5,201.4 1439.5,199.8 1440.5,201.3 1441.5,200.5 1442.5,200.4 1443.5,199.3 1444.5,199.5 1445.5,197.8 1446.5,198.8 1447.5,198.0 1448.5,198.4 1449.5,199.6 1450.5,199.1 1451.5,198.9 1452.5,200.2 1453.5,199.5 1454.5,196.9 1455.5,199.0 1456.5,199.5 1457.5,199.0 1458.5,198.0 1459.5,197.3 1460.5,200.1 1461.5,198.9 1462.5,198.9 1463.5,202.0 1464.5,199.3 1465.5,198.8 1466.5,196.7 1467.5,196.1 1468.5,195.7 1469.5,200.3 1470.5,200.3 1471.5,200.0 1472.5,199.6 1473.5,196.7 1474.5,196.1 1475.5,202.6 1476.5,199.4 1477.5,199.4 1478.5,200.9 1479.5,199.5 1480.5,199.1 1481.5,199.1 1482.5,200.4 1483.5,198.3 1484.5,199.4 1485.5,201.4 1486.5,200.0 1487.5,199.4 1488.5,203.5 1489.5,200.2 1490.5,195.1 1491.5,194.7 1492.5,197.0 1493.5,200.9 1494.5,199.9 1495.5,197.5 1496.5,196.4 1497.5,198.5 1498.5,198.5 1499.5,196.5 1500.5,197.3 1501.5,195.9 1502.5,198.4 1503.5,199.2 1504.5,198.7 1505.5,197.2 1506.5,195.4 1507.5,196.9 1508.5,194.9 1509.5,198.2 1510.5,198.9 1511.5,197.0 1512.5,199.8 1513.5,199.7 1514.5,199.2 1515.5,195.8 1516.5,192.9 1517.5,197.0 1518.5,200.1 1519.5,200.3 1520.5,197.5 1521.5,196.7 1522.5,197.7 1523.5,198.9 1524.5,196.8 1525.5,197.0 1526.5,196.9 1527.5,197.4 1528.5,198.1 1529.5,197.8 1530.5,197.6 1531.5,198.0 1532.5,199.8 1533.5,199.6 1534.5,196.6 1535.5,204.0 1536.5,199.7 1537.5,198.9 1538.5,200.6 1539.5,200.2 1540.5,200.3 1541.5,197.5 1542.5,197.2 1543.5,201.1 1544.5,203.0 1545.5,201.1 1546.5,199.9 1547.5,197.2 1548.5,195.6 1549.5,203.1 1550.5,199.6 1551.5,195.6 1552.5,195.2 1553.5,194.7 1554.5,197.8 1555.5,199.1 1556.5,196.4 1557.5,197.6 1558.5,200.2 1559.5,198.1 1560.5,195.3 1561.5,194.1 1562.5,195.3 1563.5,201.7 1564.5,201.9 1565.5,200.0 1566.5,199.9 1567.5,197.2 1568.5,197.3 1569.5,199.3 1570.5,204.1 1571.5,197.7 1572.5,196.0 1573.5,198.2 1574.5,195.8 1575.5,193.4 1576.5,196.0 1577.5,199.7 1578.5,201.7 1579.5,197.9 1580.5,196.8 1581.5,201.1 1582.5,199.4 1583.5,197.1 1584.5,195.5 1585.5,196.6 1586.5,199.9 1587.5,198.1 1588.5,198.6 1589.5,197.8 1590.5,200.1 1591.5,198.3 1592.5,198.9 1593.5,199.0 1594.5,198.1 1595.5,197.0 1596.5,199.6 1597.5,201.1 1598.5,198.3 1599.5,196.8 1600.5,195.4 1601.5,197.4 1602.5,197.6 1603.5,197.7 1604.5,197.1 1605.5,196.0 1606.5,198.7 1607.5,198.8 1608.5,198.2 1609.5,198.9 1610.5,199.8 1611.5,198.2 1612.5,197.3 1613.5,199.3 1614.5,197.6 1615.5,195.7 1616.5,195.0 1617.5,196.6 1618.5,196.0 1619.5,196.9 1620.5,198.6 1621.5,199.0 1622.5,200.0 1623.5,199.0 1624.5,197.4 1625.5,197.0 1626.5,197.4 1627.5,198.9 1628.5,198.3 1629.5,197.9 1630.5,204.6 1631.5,198.5 1632.5,195.6 1633.5,195.5 1634.5,198.2 1635.5,198.8 1636.5,198.1 1637.5,197.0 1638.5,196.4 1639.5,197.4 1640.5,198.4 1641.5,198.0 1642.5,197.6 1643.5,197.5 1644.5,198.6 1645.5,198.4 1646.5,197.5 1647.5,199.5 1648.5,200.5 1649.5,200.0 1650.5,198.3 1651.5,197.2 1652.5,196.6 1653.5,197.6 1654.5,194.8 1655.5,196.2 1656.5,197.9 1657.5,200.5 1658.5,198.2 1659.5,195.8 1660.5,194.9 1661.5,196.3 1662.5,198.1 1663.5,198.3 1664.5,197.6 1665.5,196.9 1666.5,198.1 1667.5,199.3 1668.5,197.0 1669.5,198.7 1670.5,201.4 1671.5,199.9 1672.5,198.2 1673.5,198.8 1674.5,197.4 1675.5,198.8 1676.5,202.1 1677.5,201.5 1678.5,200.3 1679.5,199.7 1680.5,201.8 1681.5,198.7 1682.5,199.3 1683.5,200.8 1684.5,199.4 1685.5,198.8 1686.5,197.4 1687.5,195.2 1688.5,197.8 1689.5,198.8 1690.5,206.7 1691.5,208.5 1692.5,202.4 1693.5,198.4 1694.5,199.1 1695.5,199.6 1696.5,199.5 1697.5,195.9 1698.5,194.4 1699.5,194.6 1700.5,198.3 1701.5,198.4 1702.5,196.9 1703.5,196.5 1704.5,198.5 1705.5,196.4 1706.5,197.1 1707.5,198.2 1708.5,200.7 1709.5,199.4 1710.5,196.9 1711.5,197.7 1712.5,200.5 1713.5,200.1 1714.5,199.7 1715.5,200.8 1716.5,208.7 1717.5,212.4 1718.5,213.0 1719.5,214.7 1720.5,218.5 1721.5,217.8 1722.5,216.4 1723.5,216.5 1724.5,218.2 1725.5,217.0 1726.5,216.6 1727.5,217.7 1728.5,214.4 1729.5,214.6 1730.5,219.0 1731.5,215.7 1732.5,213.3 1733.5,212.9 1734.5,214.0 1735.5,215.4 1736.5,215.3 1737.5,214.0 1738.5,211.2 1739.5,209.2 1740.5,211.8 1741.5,214.1 1742.5,212.8 1743.5,210.5 1744.5,210.3 1745.5,208.5 1746.5,207.2 1747.5,205.3 1748.5,206.0 1749.5,206.6 1750.5,206.3 1751.5,207.8 1752.5,209.4 1753.5,207.6 1754.5,203.7 1755.5,201.6 1756.5,205.6 1757.5,200.3 1758.5,201.5 1759.5,202.1 1760.5,201.5 1761.5,201.0 1762.5,204.0 1763.5,199.3 1764.5,199.1 1765.5,202.3 1766.5,201.1 1767.5,197.0 1768.5,195.8 1769.5,196.3 1770.5,197.9 1771.5,199.9 1772.5,199.9 1773.5,199.5 1774.5,199.3 1775.5,198.8 1776.5,197.6 1777.5,196.3 1778.5,193.9 1779.5,191.4 1780.5,194.0 1781.5,196.5 1782.5,193.2 1783.5,192.4 1784.5,194.3 1785.5,192.9 1786.5,194.7 1787.5,194.6 1788.5,194.0 1789.5,192.5 1790.5,190.6 1791.5,191.4 1792.5,191.8 1793.5,192.4 1794.5,193.0 1795.5,192.4 1796.5,190.8 1797.5,189.9 1798.5,187.8 1799.5,189.6 1800.5,189.9 1801.5,187.6 1802.5,186.5 1803.5,186.6 1804.5,185.7 1805.5,187.4 1806.5,187.3 1807.5,185.5 1808.5,186.8 1809.5,188.9 1810.5,189.2 1811.5,188.2 1812.5,185.9 1813.5,184.6 1814.5,184.8 1815.5,187.2 1816.5,190.0 1817.5,189.2 1818.5,188.6 1819.5,186.4 1820.5,181.8 1821.5,182.1 1822.5,183.2 1823.5,186.0 1824.5,186.1 1825.5,182.5 1826.5,182.4 1827.5,182.8 1828.5,181.0 1829.5,179.9 1830.5,180.4 1831.5,181.7 1832.5,180.5 1833.5,182.1 1834.5,181.6 1835.5,182.3 1836.5,182.6 1837.5,178.9 1838.5,179.0 1839.5,182.4 1840.5,183.0 1841.5,188.0 1842.5,185.4 1843.0,267.5" fill="url(#sp)"/>
<path d="M831.0 118.50 H1843.0 M831.0 155.50 H1843.0 M831.0 192.50 H1843.0 M831.0 230.50 H1843.0 M906.50 80.0 V267.5 M1005.50 80.0 V267.5 M1104.50 80.0 V267.5 M1203.50 80.0 V267.5 M1301.50 80.0 V267.5 M1400.50 80.0 V267.5 M1499.50 80.0 V267.5 M1598.50 80.0 V267.5 M1697.50 80.0 V267.5 M1795.50 80.0 V267.5" stroke="#8c8c8c" stroke-width="1" fill="none" opacity="0.95"/>
<polyline points="831.5,183.5 832.5,180.9 833.5,180.6 834.5,180.7 835.5,179.2 836.5,179.7 837.5,179.0 838.5,177.4 839.5,180.7 840.5,176.9 841.5,173.6 842.5,178.8 843.5,179.6 844.5,178.6 845.5,177.3 846.5,176.2 847.5,178.6 848.5,178.9 849.5,177.7 850.5,175.2 851.5,179.9 852.5,178.7 853.5,178.2 854.5,180.7 855.5,177.6 856.5,174.5 857.5,174.3 858.5,173.5 859.5,177.1 860.5,176.2 861.5,175.8 862.5,177.0 863.5,178.3 864.5,175.1 865.5,172.6 866.5,173.1 867.5,173.1 868.5,180.8 869.5,176.9 870.5,174.4 871.5,185.1 872.5,192.5 873.5,195.4 874.5,191.1 875.5,186.6 876.5,186.3 877.5,191.3 878.5,194.8 879.5,192.3 880.5,192.2 881.5,196.7 882.5,196.9 883.5,197.6 884.5,203.4 885.5,196.9 886.5,193.2 887.5,191.8 888.5,194.5 889.5,195.7 890.5,197.1 891.5,196.6 892.5,192.5 893.5,196.1 894.5,199.4 895.5,197.1 896.5,195.3 897.5,195.1 898.5,196.1 899.5,197.5 900.5,198.4 901.5,202.0 902.5,201.2 903.5,202.1 904.5,205.1 905.5,205.5 906.5,203.3 907.5,203.9 908.5,204.7 909.5,202.9 910.5,201.4 911.5,205.2 912.5,207.1 913.5,206.1 914.5,204.3 915.5,209.6 916.5,205.3 917.5,206.9 918.5,210.3 919.5,211.5 920.5,210.5 921.5,210.3 922.5,210.5 923.5,209.7 924.5,210.1 925.5,209.0 926.5,211.4 927.5,215.3 928.5,214.0 929.5,211.4 930.5,210.6 931.5,210.9 932.5,213.0 933.5,213.0 934.5,211.2 935.5,213.2 936.5,213.8 937.5,218.2 938.5,213.9 939.5,217.3 940.5,214.8 941.5,218.8 942.5,216.3 943.5,217.9 944.5,216.7 945.5,214.6 946.5,216.4 947.5,217.1 948.5,216.7 949.5,217.9 950.5,221.1 951.5,219.1 952.5,218.4 953.5,224.8 954.5,221.3 955.5,221.6 956.5,223.3 957.5,222.7 958.5,221.0 959.5,220.0 960.5,217.1 961.5,213.7 962.5,212.6 963.5,212.7 964.5,212.9 965.5,210.4 966.5,209.3 967.5,213.7 968.5,209.2 969.5,208.4 970.5,211.2 971.5,216.5 972.5,211.7 973.5,210.1 974.5,208.2 975.5,207.9 976.5,209.1 977.5,209.6 978.5,209.0 979.5,208.8 980.5,207.8 981.5,208.6 982.5,207.2 983.5,209.4 984.5,211.9 985.5,213.4 986.5,212.7 987.5,213.8 988.5,211.0 989.5,212.9 990.5,211.6 991.5,208.9 992.5,210.8 993.5,212.1 994.5,208.2 995.5,210.0 996.5,211.1 997.5,209.0 998.5,209.1 999.5,207.1 1000.5,206.5 1001.5,207.2 1002.5,208.8 1003.5,209.4 1004.5,210.0 1005.5,207.8 1006.5,208.7 1007.5,210.7 1008.5,209.6 1009.5,207.2 1010.5,208.9 1011.5,208.6 1012.5,209.3 1013.5,210.2 1014.5,211.0 1015.5,208.5 1016.5,203.2 1017.5,205.7 1018.5,209.0 1019.5,209.2 1020.5,210.5 1021.5,209.3 1022.5,208.0 1023.5,209.5 1024.5,206.6 1025.5,205.7 1026.5,212.2 1027.5,206.7 1028.5,209.0 1029.5,210.5 1030.5,208.2 1031.5,206.2 1032.5,208.3 1033.5,205.7 1034.5,205.0 1035.5,207.4 1036.5,209.6 1037.5,209.7 1038.5,209.5 1039.5,207.8 1040.5,207.0 1041.5,205.9 1042.5,207.3 1043.5,208.8 1044.5,208.2 1045.5,208.4 1046.5,207.0 1047.5,206.7 1048.5,207.6 1049.5,208.0 1050.5,209.0 1051.5,209.6 1052.5,210.9 1053.5,208.4 1054.5,206.8 1055.5,206.0 1056.5,207.7 1057.5,208.6 1058.5,206.9 1059.5,207.7 1060.5,208.9 1061.5,207.7 1062.5,207.3 1063.5,209.2 1064.5,208.7 1065.5,212.3 1066.5,210.6 1067.5,210.1 1068.5,207.4 1069.5,206.7 1070.5,207.7 1071.5,206.4 1072.5,205.8 1073.5,208.6 1074.5,206.9 1075.5,208.1 1076.5,206.6 1077.5,208.6 1078.5,208.1 1079.5,206.1 1080.5,204.8 1081.5,207.6 1082.5,206.8 1083.5,207.1 1084.5,208.0 1085.5,208.2 1086.5,212.3 1087.5,206.4 1088.5,208.0 1089.5,207.0 1090.5,209.0 1091.5,210.1 1092.5,208.2 1093.5,204.8 1094.5,207.6 1095.5,209.8 1096.5,207.7 1097.5,206.4 1098.5,207.0 1099.5,206.7 1100.5,207.8 1101.5,207.4 1102.5,209.6 1103.5,208.2 1104.5,206.3 1105.5,208.1 1106.5,208.5 1107.5,206.2 1108.5,204.5 1109.5,203.2 1110.5,206.7 1111.5,205.1 1112.5,201.8 1113.5,202.4 1114.5,205.8 1115.5,207.9 1116.5,207.3 1117.5,212.8 1118.5,204.3 1119.5,204.2 1120.5,207.7 1121.5,208.0 1122.5,207.6 1123.5,206.0 1124.5,205.4 1125.5,205.9 1126.5,209.1 1127.5,210.3 1128.5,208.5 1129.5,209.0 1130.5,204.1 1131.5,206.6 1132.5,205.4 1133.5,203.7 1134.5,206.5 1135.5,208.0 1136.5,206.6 1137.5,206.9 1138.5,208.0 1139.5,204.1 1140.5,202.6 1141.5,203.6 1142.5,204.6 1143.5,208.3 1144.5,207.0 1145.5,204.6 1146.5,206.3 1147.5,210.4 1148.5,206.3 1149.5,204.7 1150.5,206.6 1151.5,207.5 1152.5,206.3 1153.5,204.0 1154.5,203.9 1155.5,206.4 1156.5,205.3 1157.5,203.8 1158.5,207.5 1159.5,207.8 1160.5,205.8 1161.5,205.5 1162.5,205.8 1163.5,204.1 1164.5,207.2 1165.5,204.8 1166.5,203.8 1167.5,204.8 1168.5,203.5 1169.5,204.7 1170.5,206.5 1171.5,208.1 1172.5,204.1 1173.5,202.3 1174.5,203.1 1175.5,203.1 1176.5,204.3 1177.5,206.5 1178.5,208.1 1179.5,208.5 1180.5,206.8 1181.5,210.8 1182.5,210.3 1183.5,205.0 1184.5,201.4 1185.5,204.1 1186.5,204.3 1187.5,201.6 1188.5,204.2 1189.5,204.7 1190.5,204.3 1191.5,206.6 1192.5,207.2 1193.5,205.2 1194.5,205.1 1195.5,203.9 1196.5,203.6 1197.5,205.3 1198.5,205.9 1199.5,203.3 1200.5,201.5 1201.5,204.1 1202.5,202.9 1203.5,205.5 1204.5,208.3 1205.5,205.5 1206.5,202.3 1207.5,202.6 1208.5,206.3 1209.5,206.0 1210.5,206.5 1211.5,211.5 1212.5,205.3 1213.5,203.9 1214.5,201.4 1215.5,198.3 1216.5,200.6 1217.5,203.9 1218.5,209.5 1219.5,205.4 1220.5,205.0 1221.5,205.5 1222.5,205.8 1223.5,204.2 1224.5,202.9 1225.5,202.4 1226.5,205.6 1227.5,205.7 1228.5,206.5 1229.5,208.3 1230.5,207.4 1231.5,205.7 1232.5,205.2 1233.5,202.9 1234.5,204.7 1235.5,204.2 1236.5,202.7 1237.5,205.6 1238.5,204.5 1239.5,205.1 1240.5,204.8 1241.5,206.7 1242.5,206.8 1243.5,202.9 1244.5,201.3 1245.5,203.8 1246.5,205.6 1247.5,203.9 1248.5,203.4 1249.5,203.3 1250.5,199.5 1251.5,199.5 1252.5,201.8 1253.5,203.6 1254.5,202.6 1255.5,203.4 1256.5,202.2 1257.5,201.5 1258.5,203.0 1259.5,202.8 1260.5,202.7 1261.5,203.3 1262.5,206.4 1263.5,204.8 1264.5,205.2 1265.5,204.8 1266.5,203.3 1267.5,204.8 1268.5,205.2 1269.5,204.5 1270.5,203.3 1271.5,203.5 1272.5,205.4 1273.5,207.7 1274.5,204.1 1275.5,204.2 1276.5,204.0 1277.5,205.3 1278.5,205.7 1279.5,204.3 1280.5,199.3 1281.5,200.6 1282.5,201.7 1283.5,202.6 1284.5,202.1 1285.5,202.6 1286.5,205.6 1287.5,210.8 1288.5,199.8 1289.5,201.7 1290.5,204.0 1291.5,203.6 1292.5,202.3 1293.5,200.6 1294.5,201.6 1295.5,204.9 1296.5,205.9 1297.5,203.8 1298.5,202.2 1299.5,203.1 1300.5,203.5 1301.5,204.4 1302.5,203.7 1303.5,197.9 1304.5,202.8 1305.5,202.1 1306.5,204.9 1307.5,205.3 1308.5,202.4 1309.5,203.0 1310.5,202.7 1311.5,205.3 1312.5,205.5 1313.5,204.2 1314.5,205.8 1315.5,203.0 1316.5,201.8 1317.5,202.1 1318.5,202.8 1319.5,203.0 1320.5,203.2 1321.5,203.0 1322.5,205.0 1323.5,205.4 1324.5,202.4 1325.5,201.2 1326.5,204.6 1327.5,205.8 1328.5,203.1 1329.5,201.4 1330.5,204.1 1331.5,205.2 1332.5,201.4 1333.5,203.1 1334.5,202.0 1335.5,202.1 1336.5,203.1 1337.5,201.7 1338.5,209.5 1339.5,206.0 1340.5,204.0 1341.5,201.0 1342.5,199.0 1343.5,199.0 1344.5,200.2 1345.5,204.6 1346.5,202.8 1347.5,200.2 1348.5,199.4 1349.5,200.0 1350.5,200.7 1351.5,201.1 1352.5,204.2 1353.5,201.6 1354.5,200.7 1355.5,203.1 1356.5,205.5 1357.5,204.9 1358.5,202.0 1359.5,201.4 1360.5,202.5 1361.5,202.8 1362.5,201.8 1363.5,199.4 1364.5,198.9 1365.5,200.3 1366.5,200.1 1367.5,202.9 1368.5,201.4 1369.5,199.1 1370.5,199.5 1371.5,199.7 1372.5,200.8 1373.5,201.4 1374.5,197.6 1375.5,196.7 1376.5,199.9 1377.5,200.4 1378.5,200.7 1379.5,201.0 1380.5,200.5 1381.5,200.8 1382.5,198.9 1383.5,199.0 1384.5,197.8 1385.5,201.9 1386.5,200.4 1387.5,199.8 1388.5,195.8 1389.5,196.5 1390.5,199.8 1391.5,200.8 1392.5,198.5 1393.5,197.5 1394.5,197.9 1395.5,202.6 1396.5,201.5 1397.5,200.9 1398.5,200.8 1399.5,200.9 1400.5,199.9 1401.5,198.7 1402.5,199.6 1403.5,199.8 1404.5,200.3 1405.5,197.7 1406.5,197.5 1407.5,200.1 1408.5,201.1 1409.5,199.1 1410.5,197.3 1411.5,197.6 1412.5,198.7 1413.5,202.0 1414.5,201.8 1415.5,201.3 1416.5,199.4 1417.5,198.4 1418.5,201.1 1419.5,202.3 1420.5,200.4 1421.5,199.4 1422.5,200.1 1423.5,198.9 1424.5,199.2 1425.5,197.2 1426.5,196.8 1427.5,197.2 1428.5,200.5 1429.5,201.8 1430.5,199.1 1431.5,197.7 1432.5,195.5 1433.5,193.6 1434.5,194.7 1435.5,197.6 1436.5,197.4 1437.5,200.6 1438.5,201.4 1439.5,199.8 1440.5,201.3 1441.5,200.5 1442.5,200.4 1443.5,199.3 1444.5,199.5 1445.5,197.8 1446.5,198.8 1447.5,198.0 1448.5,198.4 1449.5,199.6 1450.5,199.1 1451.5,198.9 1452.5,200.2 1453.5,199.5 1454.5,196.9 1455.5,199.0 1456.5,199.5 1457.5,199.0 1458.5,198.0 1459.5,197.3 1460.5,200.1 1461.5,198.9 1462.5,198.9 1463.5,202.0 1464.5,199.3 1465.5,198.8 1466.5,196.7 1467.5,196.1 1468.5,195.7 1469.5,200.3 1470.5,200.3 1471.5,200.0 1472.5,199.6 1473.5,196.7 1474.5,196.1 1475.5,202.6 1476.5,199.4 1477.5,199.4 1478.5,200.9 1479.5,199.5 1480.5,199.1 1481.5,199.1 1482.5,200.4 1483.5,198.3 1484.5,199.4 1485.5,201.4 1486.5,200.0 1487.5,199.4 1488.5,203.5 1489.5,200.2 1490.5,195.1 1491.5,194.7 1492.5,197.0 1493.5,200.9 1494.5,199.9 1495.5,197.5 1496.5,196.4 1497.5,198.5 1498.5,198.5 1499.5,196.5 1500.5,197.3 1501.5,195.9 1502.5,198.4 1503.5,199.2 1504.5,198.7 1505.5,197.2 1506.5,195.4 1507.5,196.9 1508.5,194.9 1509.5,198.2 1510.5,198.9 1511.5,197.0 1512.5,199.8 1513.5,199.7 1514.5,199.2 1515.5,195.8 1516.5,192.9 1517.5,197.0 1518.5,200.1 1519.5,200.3 1520.5,197.5 1521.5,196.7 1522.5,197.7 1523.5,198.9 1524.5,196.8 1525.5,197.0 1526.5,196.9 1527.5,197.4 1528.5,198.1 1529.5,197.8 1530.5,197.6 1531.5,198.0 1532.5,199.8 1533.5,199.6 1534.5,196.6 1535.5,204.0 1536.5,199.7 1537.5,198.9 1538.5,200.6 1539.5,200.2 1540.5,200.3 1541.5,197.5 1542.5,197.2 1543.5,201.1 1544.5,203.0 1545.5,201.1 1546.5,199.9 1547.5,197.2 1548.5,195.6 1549.5,203.1 1550.5,199.6 1551.5,195.6 1552.5,195.2 1553.5,194.7 1554.5,197.8 1555.5,199.1 1556.5,196.4 1557.5,197.6 1558.5,200.2 1559.5,198.1 1560.5,195.3 1561.5,194.1 1562.5,195.3 1563.5,201.7 1564.5,201.9 1565.5,200.0 1566.5,199.9 1567.5,197.2 1568.5,197.3 1569.5,199.3 1570.5,204.1 1571.5,197.7 1572.5,196.0 1573.5,198.2 1574.5,195.8 1575.5,193.4 1576.5,196.0 1577.5,199.7 1578.5,201.7 1579.5,197.9 1580.5,196.8 1581.5,201.1 1582.5,199.4 1583.5,197.1 1584.5,195.5 1585.5,196.6 1586.5,199.9 1587.5,198.1 1588.5,198.6 1589.5,197.8 1590.5,200.1 1591.5,198.3 1592.5,198.9 1593.5,199.0 1594.5,198.1 1595.5,197.0 1596.5,199.6 1597.5,201.1 1598.5,198.3 1599.5,196.8 1600.5,195.4 1601.5,197.4 1602.5,197.6 1603.5,197.7 1604.5,197.1 1605.5,196.0 1606.5,198.7 1607.5,198.8 1608.5,198.2 1609.5,198.9 1610.5,199.8 1611.5,198.2 1612.5,197.3 1613.5,199.3 1614.5,197.6 1615.5,195.7 1616.5,195.0 1617.5,196.6 1618.5,196.0 1619.5,196.9 1620.5,198.6 1621.5,199.0 1622.5,200.0 1623.5,199.0 1624.5,197.4 1625.5,197.0 1626.5,197.4 1627.5,198.9 1628.5,198.3 1629.5,197.9 1630.5,204.6 1631.5,198.5 1632.5,195.6 1633.5,195.5 1634.5,198.2 1635.5,198.8 1636.5,198.1 1637.5,197.0 1638.5,196.4 1639.5,197.4 1640.5,198.4 1641.5,198.0 1642.5,197.6 1643.5,197.5 1644.5,198.6 1645.5,198.4 1646.5,197.5 1647.5,199.5 1648.5,200.5 1649.5,200.0 1650.5,198.3 1651.5,197.2 1652.5,196.6 1653.5,197.6 1654.5,194.8 1655.5,196.2 1656.5,197.9 1657.5,200.5 1658.5,198.2 1659.5,195.8 1660.5,194.9 1661.5,196.3 1662.5,198.1 1663.5,198.3 1664.5,197.6 1665.5,196.9 1666.5,198.1 1667.5,199.3 1668.5,197.0 1669.5,198.7 1670.5,201.4 1671.5,199.9 1672.5,198.2 1673.5,198.8 1674.5,197.4 1675.5,198.8 1676.5,202.1 1677.5,201.5 1678.5,200.3 1679.5,199.7 1680.5,201.8 1681.5,198.7 1682.5,199.3 1683.5,200.8 1684.5,199.4 1685.5,198.8 1686.5,197.4 1687.5,195.2 1688.5,197.8 1689.5,198.8 1690.5,206.7 1691.5,208.5 1692.5,202.4 1693.5,198.4 1694.5,199.1 1695.5,199.6 1696.5,199.5 1697.5,195.9 1698.5,194.4 1699.5,194.6 1700.5,198.3 1701.5,198.4 1702.5,196.9 1703.5,196.5 1704.5,198.5 1705.5,196.4 1706.5,197.1 1707.5,198.2 1708.5,200.7 1709.5,199.4 1710.5,196.9 1711.5,197.7 1712.5,200.5 1713.5,200.1 1714.5,199.7 1715.5,200.8 1716.5,208.7 1717.5,212.4 1718.5,213.0 1719.5,214.7 1720.5,218.5 1721.5,217.8 1722.5,216.4 1723.5,216.5 1724.5,218.2 1725.5,217.0 1726.5,216.6 1727.5,217.7 1728.5,214.4 1729.5,214.6 1730.5,219.0 1731.5,215.7 1732.5,213.3 1733.5,212.9 1734.5,214.0 1735.5,215.4 1736.5,215.3 1737.5,214.0 1738.5,211.2 1739.5,209.2 1740.5,211.8 1741.5,214.1 1742.5,212.8 1743.5,210.5 1744.5,210.3 1745.5,208.5 1746.5,207.2 1747.5,205.3 1748.5,206.0 1749.5,206.6 1750.5,206.3 1751.5,207.8 1752.5,209.4 1753.5,207.6 1754.5,203.7 1755.5,201.6 1756.5,205.6 1757.5,200.3 1758.5,201.5 1759.5,202.1 1760.5,201.5 1761.5,201.0 1762.5,204.0 1763.5,199.3 1764.5,199.1 1765.5,202.3 1766.5,201.1 1767.5,197.0 1768.5,195.8 1769.5,196.3 1770.5,197.9 1771.5,199.9 1772.5,199.9 1773.5,199.5 1774.5,199.3 1775.5,198.8 1776.5,197.6 1777.5,196.3 1778.5,193.9 1779.5,191.4 1780.5,194.0 1781.5,196.5 1782.5,193.2 1783.5,192.4 1784.5,194.3 1785.5,192.9 1786.5,194.7 1787.5,194.6 1788.5,194.0 1789.5,192.5 1790.5,190.6 1791.5,191.4 1792.5,191.8 1793.5,192.4 1794.5,193.0 1795.5,192.4 1796.5,190.8 1797.5,189.9 1798.5,187.8 1799.5,189.6 1800.5,189.9 1801.5,187.6 1802.5,186.5 1803.5,186.6 1804.5,185.7 1805.5,187.4 1806.5,187.3 1807.5,185.5 1808.5,186.8 1809.5,188.9 1810.5,189.2 1811.5,188.2 1812.5,185.9 1813.5,184.6 1814.5,184.8 1815.5,187.2 1816.5,190.0 1817.5,189.2 1818.5,188.6 1819.5,186.4 1820.5,181.8 1821.5,182.1 1822.5,183.2 1823.5,186.0 1824.5,186.1 1825.5,182.5 1826.5,182.4 1827.5,182.8 1828.5,181.0 1829.5,179.9 1830.5,180.4 1831.5,181.7 1832.5,180.5 1833.5,182.1 1834.5,181.6 1835.5,182.3 1836.5,182.6 1837.5,178.9 1838.5,179.0 1839.5,182.4 1840.5,183.0 1841.5,188.0 1842.5,185.4" fill="none" stroke="#f2f2f2" stroke-width="1.15" stroke-linejoin="round"/>
<rect x="830.0" y="79" width="1014.0" height="2" fill="#a4a4a4"/>
<path d="M1843.2 80.0 V267.5 M831.0 267.5 H1843.0" stroke="#a0a0a0" stroke-width="1.3" fill="none"/>
<rect x="830" y="80.5" width="2" height="187.5" fill="#d04a4a"/>
<path d="M1337.5 80 V267.5" stroke="#f0f040" stroke-width="1"/>
<text x="815.50" y="86.40" font-size="16.20" text-anchor="end">40.0</text>
<text x="815.50" y="123.90" font-size="16.20" text-anchor="end">20.0</text>
<text x="815.50" y="161.40" font-size="16.20" text-anchor="end">0.0</text>
<text x="815.50" y="198.90" font-size="16.20" text-anchor="end">-20.0</text>
<text x="815.50" y="236.40" font-size="16.20" text-anchor="end">-40.0</text>
<text x="815.50" y="273.90" font-size="16.20" text-anchor="end">-60.0</text>
<text x="906.50" y="286.87" font-size="16.40" text-anchor="middle">214.2</text>
<text x="1005.50" y="286.87" font-size="16.40" text-anchor="middle">214.4</text>
<text x="1104.40" y="286.87" font-size="16.40" text-anchor="middle">214.6</text>
<text x="1203.30" y="286.87" font-size="16.40" text-anchor="middle">214.8</text>
<text x="1301.70" y="286.87" font-size="16.40" text-anchor="middle">215</text>
<text x="1400.60" y="286.87" font-size="16.40" text-anchor="middle">215.2</text>
<text x="1499.50" y="286.87" font-size="16.40" text-anchor="middle">215.4</text>
<text x="1598.40" y="286.87" font-size="16.40" text-anchor="middle">215.6</text>
<text x="1697.20" y="286.87" font-size="16.40" text-anchor="middle">215.8</text>
<text x="1795.90" y="286.87" font-size="16.40" text-anchor="middle">216</text>
<text x="1337.00" y="315.76" font-size="20.00" text-anchor="middle">Frequency (MHz)</text>
<text x="742.00" y="181.16" font-size="20.00" text-anchor="middle" transform="rotate(-90 742.00 174.00)">Magnitude (dB)</text>
<rect x="1246.3" y="432.0" width="152.4" height="184.3" fill="#414141"/>
<path d="M1246.3 469.50 H1866 M1246.3 506.50 H1866 M1246.3 543.50 H1866 M1246.3 579.50 H1866 M1274.50 432.0 V616.3 M1315.50 432.0 V616.3 M1357.50 432.0 V616.3 M1398.50 432.0 V616.3 M1440.50 432.0 V616.3 M1481.50 432.0 V616.3 M1523.50 432.0 V616.3 M1564.50 432.0 V616.3 M1605.50 432.0 V616.3 M1647.50 432.0 V616.3 M1688.50 432.0 V616.3 M1730.50 432.0 V616.3 M1771.50 432.0 V616.3 M1813.50 432.0 V616.3 M1854.50 432.0 V616.3" stroke="#9c9c9c" stroke-width="1" fill="none" opacity="0.9"/>
<rect x="1245.3" y="431" width="640" height="2" fill="#a4a4a4"/>
<path d="M1246.3 616.3 H1866" stroke="#a0a0a0" stroke-width="1.3" fill="none"/>
<rect x="1245.5" y="432.5" width="1.8" height="184.3" fill="#b83a3a"/>
<path d="M1398.75 432 V616" stroke="#e8e840" stroke-width="1" stroke-dasharray="1.2 1.2"/>
<polyline clip-path="url(#c2)" points="1246.8,586.3 1247.9,588.1 1249.0,599.4 1250.2,600.3 1251.3,593.5 1252.4,593.5 1253.5,599.3 1254.6,598.0 1255.8,596.1 1256.9,589.1 1258.0,587.2 1259.1,584.3 1260.2,588.2 1261.4,581.9 1262.5,582.7 1263.6,586.1 1264.7,591.4 1265.8,593.5 1267.0,595.8 1268.1,587.1 1269.2,582.6 1270.3,590.2 1271.4,595.9 1272.6,588.9 1273.7,588.9 1274.8,589.6 1275.9,582.2 1277.0,585.6 1278.2,592.9 1279.3,596.0 1280.4,594.3 1281.5,582.2 1282.6,579.0 1283.8,586.5 1284.9,595.9 1286.0,590.6 1287.1,594.0 1288.2,589.2 1289.4,596.4 1290.5,602.7 1291.6,607.0 1292.7,595.5 1293.8,590.0 1295.0,588.8 1296.1,580.5 1297.2,589.0 1298.3,592.0 1299.4,582.4 1300.6,588.1 1301.7,584.6 1302.8,586.7 1303.9,594.7 1305.0,596.3 1306.2,599.5 1307.3,590.5 1308.4,587.3 1309.5,593.3 1310.6,606.1 1311.8,603.3 1312.9,596.2 1314.0,602.1 1315.1,608.5 1316.2,604.6 1317.4,590.8 1318.5,587.2 1319.6,596.4 1320.7,598.8 1321.8,594.5 1323.0,599.2 1324.1,598.8 1325.2,597.0 1326.3,602.7 1327.4,597.1 1328.6,587.2 1329.7,588.0 1330.8,593.6 1331.9,591.2 1333.0,588.5 1334.2,593.0 1335.3,593.5 1336.4,594.4 1337.5,593.4 1338.6,598.1 1339.8,593.1 1340.9,597.4 1342.0,591.8 1343.1,588.0 1344.2,600.2 1345.4,600.5 1346.5,589.0 1347.6,591.8 1348.7,592.2 1349.8,596.4 1351.0,603.3 1352.1,599.0 1353.2,590.1 1354.3,591.8 1355.4,589.8 1356.6,583.0 1357.7,591.5 1358.8,603.4 1359.9,595.8 1361.0,593.7 1362.2,597.3 1363.3,598.1 1364.4,599.6 1365.5,589.5 1366.6,581.1 1367.8,586.4 1368.9,600.7 1370.0,602.2 1371.1,599.6 1372.2,603.7 1373.4,606.4 1374.5,611.4 1375.6,594.9 1376.7,584.6 1377.8,584.6 1379.0,587.3 1380.1,597.6 1381.2,612.7 1382.3,606.3 1383.4,605.9 1384.6,608.0 1385.7,602.6 1386.8,599.2 1387.9,590.2 1389.0,586.8 1390.2,582.8 1391.3,581.4 1392.4,578.9 1393.5,590.6 1394.6,590.7 1395.8,580.1 1396.9,559.2 1398.0,523.0 1399.1,509.1 1400.2,545.3 1401.4,573.2 1402.5,581.8 1403.6,584.7 1404.7,584.7 1405.8,588.6 1407.0,590.0 1408.1,597.1 1409.2,588.6 1410.3,583.0 1411.4,588.6 1412.6,586.9 1413.7,586.4 1414.8,586.0 1415.9,593.8 1417.0,599.0 1418.2,591.2 1419.3,586.6 1420.4,597.7 1421.5,602.9 1422.6,592.5 1423.8,593.7 1424.9,604.7 1426.0,598.6 1427.1,589.9 1428.2,592.5 1429.4,597.4 1430.5,594.4 1431.6,593.0 1432.7,600.3 1433.8,595.0 1435.0,589.3 1436.1,586.0 1437.2,591.0 1438.3,597.2 1439.4,591.8 1440.6,588.1 1441.7,595.4 1442.8,598.3 1443.9,601.4 1445.0,600.0 1446.2,588.2 1447.3,577.7 1448.4,585.0 1449.5,593.2 1450.6,599.4 1451.8,599.8 1452.9,601.6 1454.0,603.2 1455.1,596.2 1456.2,589.5 1457.4,590.8 1458.5,598.2 1459.6,600.7 1460.7,600.5 1461.8,591.9 1463.0,581.6 1464.1,584.9 1465.2,595.2 1466.3,593.3 1467.4,593.2 1468.6,593.8 1469.7,600.5 1470.8,598.3 1471.9,593.1 1473.0,587.7 1474.2,588.0 1475.3,596.4 1476.4,592.2 1477.5,588.8 1478.6,594.6 1479.8,594.5 1480.9,593.9 1482.0,604.1 1483.1,605.0 1484.2,602.6 1485.4,602.8 1486.5,597.3 1487.6,596.6 1488.7,605.6 1489.8,602.9 1491.0,587.8 1492.1,581.4 1493.2,583.7 1494.3,584.9 1495.4,582.8 1496.6,593.7 1497.7,611.9 1498.8,616.0 1499.9,616.0 1501.0,604.8 1502.2,595.3 1503.3,594.2 1504.4,593.6 1505.5,591.2 1506.6,583.5 1507.8,587.7 1508.9,595.9 1510.0,587.5 1511.1,586.1 1512.2,591.5 1513.4,595.9 1514.5,595.3 1515.6,602.2 1516.7,608.6 1517.8,597.3 1519.0,585.6 1520.1,588.6 1521.2,594.5 1522.3,592.0 1523.4,595.6 1524.6,597.7 1525.7,597.2 1526.8,590.9 1527.9,589.2 1529.0,579.9 1530.2,583.4 1531.3,598.6 1532.4,596.8 1533.5,586.6 1534.6,590.2 1535.8,601.5 1536.9,594.3 1538.0,584.2 1539.1,579.7 1540.2,579.8 1541.4,583.0 1542.5,588.3 1543.6,587.6 1544.7,594.3 1545.8,607.0 1547.0,599.2 1548.1,590.2 1549.2,597.2 1550.3,595.0 1551.4,590.7 1552.6,598.1 1553.7,598.2 1554.8,605.0 1555.9,602.1 1557.0,599.6 1558.2,597.3 1559.3,588.6 1560.4,589.7 1561.5,594.1 1562.6,600.8 1563.8,604.5 1564.9,602.5 1566.0,600.9 1567.1,594.7 1568.2,592.3 1569.4,590.3 1570.5,594.2 1571.6,601.4 1572.7,604.0 1573.8,590.9 1575.0,586.0 1576.1,596.4 1577.2,602.3 1578.3,596.8 1579.4,602.0 1580.6,590.8 1581.7,581.5 1582.8,583.6 1583.9,587.4 1585.0,585.1 1586.2,585.3 1587.3,593.8 1588.4,595.6 1589.5,592.5 1590.6,593.5 1591.8,594.6 1592.9,591.9 1594.0,595.2 1595.1,589.7 1596.2,596.9 1597.4,597.9 1598.5,591.5 1599.6,593.4 1600.7,593.4 1601.8,584.5 1603.0,585.5 1604.1,595.2 1605.2,595.0 1606.3,584.5 1607.4,589.2 1608.6,595.0 1609.7,596.7 1610.8,592.9 1611.9,588.9 1613.0,587.6 1614.2,588.2 1615.3,584.5 1616.4,590.0 1617.5,596.9 1618.6,598.4 1619.8,593.2 1620.9,590.3 1622.0,591.5 1623.1,582.0 1624.2,578.5 1625.4,585.7 1626.5,584.5 1627.6,587.8 1628.7,595.7 1629.8,609.5 1631.0,601.2 1632.1,588.7 1633.2,590.0 1634.3,601.3 1635.4,606.8 1636.6,605.2 1637.7,603.1 1638.8,593.9 1639.9,592.3 1641.0,591.0 1642.2,595.6 1643.3,604.3 1644.4,601.6 1645.5,596.7 1646.6,597.8 1647.8,591.4 1648.9,590.8 1650.0,590.6 1651.1,588.5 1652.2,589.3 1653.4,587.8 1654.5,596.4 1655.6,598.5 1656.7,590.4 1657.8,598.2 1659.0,598.6 1660.1,593.2 1661.2,597.7 1662.3,590.2 1663.4,580.8 1664.6,591.0 1665.7,602.0 1666.8,594.5 1667.9,595.2 1669.0,598.0 1670.2,597.9 1671.3,589.3 1672.4,595.5 1673.5,609.3 1674.6,591.7 1675.8,580.8 1676.9,590.1 1678.0,612.5 1679.1,611.0 1680.2,603.3 1681.4,594.3 1682.5,602.2 1683.6,598.1 1684.7,591.7 1685.8,593.4 1687.0,589.9 1688.1,585.9 1689.2,584.5 1690.3,585.4 1691.4,588.2 1692.6,581.0 1693.7,587.2 1694.8,602.5 1695.9,604.9 1697.0,603.2 1698.2,605.2 1699.3,592.4 1700.4,586.0 1701.5,589.2 1702.6,583.7 1703.8,583.3 1704.9,589.3 1706.0,590.7 1707.1,591.4 1708.2,593.3 1709.4,594.9 1710.5,590.3 1711.6,594.7 1712.7,603.6 1713.8,596.4 1715.0,593.7 1716.1,602.6 1717.2,612.1 1718.3,594.5 1719.4,585.5 1720.6,592.0 1721.7,594.7 1722.8,597.1 1723.9,600.7 1725.0,597.0 1726.2,594.5 1727.3,596.6 1728.4,601.5 1729.5,601.5 1730.6,599.1 1731.8,595.2 1732.9,590.5 1734.0,591.1 1735.1,594.4 1736.2,607.9 1737.4,612.6 1738.5,602.1 1739.6,608.0 1740.7,606.7 1741.8,605.2 1743.0,601.9 1744.1,598.1 1745.2,600.6 1746.3,595.1 1747.4,593.4 1748.6,592.2 1749.7,593.6 1750.8,602.3 1751.9,593.5 1753.0,584.5 1754.2,588.1 1755.3,590.8 1756.4,593.8 1757.5,588.0 1758.6,582.2 1759.8,592.2 1760.9,604.1 1762.0,602.3 1763.1,594.7 1764.2,593.9 1765.4,597.3 1766.5,598.7 1767.6,595.2 1768.7,588.6 1769.8,588.5 1771.0,599.9 1772.1,602.2 1773.2,591.6 1774.3,584.1 1775.4,579.7 1776.6,579.9 1777.7,584.7 1778.8,594.6 1779.9,597.0 1781.0,596.9 1782.2,607.9 1783.3,608.3 1784.4,593.5 1785.5,584.4 1786.6,580.0 1787.8,582.7 1788.9,593.1 1790.0,605.7 1791.1,612.7 1792.2,614.4 1793.4,612.3 1794.5,604.7 1795.6,594.2 1796.7,590.4 1797.8,598.9 1799.0,605.5 1800.1,607.0 1801.2,597.8 1802.3,593.8 1803.4,605.0 1804.6,616.0 1805.7,605.4 1806.8,597.9 1807.9,605.6 1809.0,594.8 1810.2,582.5 1811.3,585.0 1812.4,593.6 1813.5,604.6 1814.6,599.0 1815.8,591.5 1816.9,600.1 1818.0,603.1 1819.1,595.4 1820.2,586.0 1821.4,593.2 1822.5,595.7 1823.6,597.4 1824.7,590.1 1825.8,590.8 1827.0,587.6 1828.1,584.8 1829.2,587.7 1830.3,593.3 1831.4,591.2 1832.6,598.0 1833.7,610.0 1834.8,600.8 1835.9,593.7 1837.0,603.1 1838.2,607.9 1839.3,598.8 1840.4,600.1 1841.5,597.1 1842.6,589.5 1843.8,584.7 1844.9,596.3 1846.0,604.8 1847.1,592.9 1848.2,593.5 1849.4,599.9 1850.5,596.4 1851.6,605.2 1852.7,600.6 1853.8,593.1 1855.0,599.5 1856.1,602.0 1857.2,602.9 1858.3,600.6 1859.4,597.9 1860.6,601.9 1861.7,588.4 1862.8,578.9 1863.9,586.8 1865.0,589.6 1866.2,594.3" fill="none" stroke="#f0f0f0" stroke-width="1.15" stroke-linejoin="round"/>
<circle cx="1398.9" cy="507.5" r="5.2" fill="#ffee00"/>
<text x="1235.00" y="438.56" font-size="16.10" text-anchor="end">-10.0</text>
<text x="1235.00" y="475.46" font-size="16.10" text-anchor="end">-20.0</text>
<text x="1235.00" y="512.36" font-size="16.10" text-anchor="end">-30.0</text>
<text x="1235.00" y="549.26" font-size="16.10" text-anchor="end">-40.0</text>
<text x="1235.00" y="586.16" font-size="16.10" text-anchor="end">-50.0</text>
<text x="1235.00" y="623.06" font-size="16.10" text-anchor="end">-60.0</text>
<text x="1273.46" y="632.87" font-size="13.60" text-anchor="middle">-60</text>
<text x="1314.89" y="632.87" font-size="13.60" text-anchor="middle">-40</text>
<text x="1356.32" y="632.87" font-size="13.60" text-anchor="middle">-20</text>
<text x="1398.75" y="632.87" font-size="13.60" text-anchor="middle">0</text>
<text x="1440.18" y="632.87" font-size="13.60" text-anchor="middle">20</text>
<text x="1481.61" y="632.87" font-size="13.60" text-anchor="middle">40</text>
<text x="1523.04" y="632.87" font-size="13.60" text-anchor="middle">60</text>
<text x="1564.47" y="632.87" font-size="13.60" text-anchor="middle">80</text>
<text x="1605.90" y="632.87" font-size="13.60" text-anchor="middle">100</text>
<text x="1647.33" y="632.87" font-size="13.60" text-anchor="middle">120</text>
<text x="1688.76" y="632.87" font-size="13.60" text-anchor="middle">140</text>
<text x="1730.19" y="632.87" font-size="13.60" text-anchor="middle">160</text>
<text x="1771.62" y="632.87" font-size="13.60" text-anchor="middle">180</text>
<text x="1813.05" y="632.87" font-size="13.60" text-anchor="middle">200</text>
<text x="1854.48" y="632.87" font-size="13.60" text-anchor="middle">220</text>
<text x="1555.70" y="657.62" font-size="17.10" text-anchor="middle">Distance Difference (km)</text>
<text x="1170.30" y="530.58" font-size="15.60" text-anchor="middle" font-weight="bold" transform="rotate(-90 1170.30 525.00)">Magnitude (dB)</text>
<path d="M1033.0 760.50 H1857.5 M1033.0 796.50 H1857.5 M1033.0 832.50 H1857.5 M1033.0 868.50 H1857.5 M1083.50 724.0 V903.5 M1164.50 724.0 V903.5 M1244.50 724.0 V903.5 M1325.50 724.0 V903.5 M1405.50 724.0 V903.5 M1486.50 724.0 V903.5 M1566.50 724.0 V903.5 M1647.50 724.0 V903.5 M1727.50 724.0 V903.5 M1808.50 724.0 V903.5" stroke="#a4a4a4" stroke-width="1" fill="none" opacity="1"/>
<rect x="1032.5" y="723" width="826.0" height="2" fill="#aaaaaa"/>
<path d="M1033.5 724.0 V903.5 M1857.5 724.0 V903.5 M1033.0 903.8 H1857.5" stroke="#9a9a9a" stroke-width="1" fill="none"/>
<path d="M1136.98 725.0 V904.5" stroke="#d4d434" stroke-width="2.4" stroke-dasharray="2 2"/>
<path d="M1291.54 725.0 V904.5" stroke="#d4d434" stroke-width="2.4" stroke-dasharray="2 2"/>
<path d="M1446.10 725.0 V904.5" stroke="#d4d434" stroke-width="2.4" stroke-dasharray="2 2"/>
<path d="M1600.66 725.0 V904.5" stroke="#d4d434" stroke-width="2.4" stroke-dasharray="2 2"/>
<path d="M1755.22 725.0 V904.5" stroke="#d4d434" stroke-width="2.4" stroke-dasharray="2 2"/>
<path d="M1034.0 902.3 H1135.7 M1756.4 902.3 H1856.5" stroke="#a0a0a0" stroke-width="1.6"/>
<path d="M1177.00 903.0 L1177.45 878.5 L1178.05 878.5 L1178.50 903.0 Z M1196.00 903.0 L1196.45 841.8 L1197.05 841.8 L1197.50 903.0 Z M1234.75 903.0 L1235.20 836.0 L1235.80 836.0 L1236.25 903.0 Z M1273.00 903.0 L1273.45 881.0 L1274.05 881.0 L1274.50 903.0 Z M1331.50 903.0 L1331.95 872.2 L1332.55 872.2 L1333.00 903.0 Z M1350.85 903.0 L1351.30 846.8 L1351.90 846.8 L1352.35 903.0 Z M1380.95 903.0 L1381.40 900.0 L1382.00 900.0 L1382.45 903.0 Z M1389.35 903.0 L1389.80 825.3 L1390.40 825.3 L1390.85 903.0 Z M1404.05 903.0 L1404.50 893.0 L1405.10 893.0 L1405.55 903.0 Z M1428.25 903.0 L1428.70 785.3 L1429.30 785.3 L1429.75 903.0 Z M1486.25 903.0 L1486.70 724.8 L1487.30 724.8 L1487.75 903.0 Z M1505.95 903.0 L1506.40 789.2 L1507.00 789.2 L1507.45 903.0 Z M1512.65 903.0 L1513.10 900.5 L1513.70 900.5 L1514.15 903.0 Z M1544.25 903.0 L1544.70 762.2 L1545.30 762.2 L1545.75 903.0 Z M1582.75 903.0 L1583.20 748.1 L1583.80 748.1 L1584.25 903.0 Z M1641.05 903.0 L1641.50 751.0 L1642.10 751.0 L1642.55 903.0 Z M1660.25 903.0 L1660.70 752.0 L1661.30 752.0 L1661.75 903.0 Z M1698.75 903.0 L1699.20 773.2 L1699.80 773.2 L1700.25 903.0 Z M1713.95 903.0 L1714.40 894.3 L1715.00 894.3 L1715.45 903.0 Z M1737.65 903.0 L1738.10 788.7 L1738.70 788.7 L1739.15 903.0 Z" fill="#f4f4f4" stroke="#f4f4f4" stroke-width="0.7" stroke-linejoin="round"/>
<text x="1020.00" y="730.47" font-size="16.40" text-anchor="end">1.0</text>
<text x="1020.00" y="766.57" font-size="16.40" text-anchor="end">0.8</text>
<text x="1020.00" y="802.67" font-size="16.40" text-anchor="end">0.6</text>
<text x="1020.00" y="838.77" font-size="16.40" text-anchor="end">0.4</text>
<text x="1020.00" y="874.87" font-size="16.40" text-anchor="end">0.2</text>
<text x="1020.00" y="910.97" font-size="16.40" text-anchor="end">0.0</text>
<text x="1082.05" y="924.44" font-size="16.60" text-anchor="middle">-900</text>
<text x="1162.55" y="924.44" font-size="16.60" text-anchor="middle">-700</text>
<text x="1243.05" y="924.44" font-size="16.60" text-anchor="middle">-500</text>
<text x="1323.55" y="924.44" font-size="16.60" text-anchor="middle">-300</text>
<text x="1404.05" y="924.44" font-size="16.60" text-anchor="middle">-100</text>
<text x="1486.05" y="924.44" font-size="16.60" text-anchor="middle">100</text>
<text x="1566.55" y="924.44" font-size="16.60" text-anchor="middle">300</text>
<text x="1647.05" y="924.44" font-size="16.60" text-anchor="middle">500</text>
<text x="1727.55" y="924.44" font-size="16.60" text-anchor="middle">700</text>
<text x="1808.05" y="924.44" font-size="16.60" text-anchor="middle">900</text>
<text x="1445.50" y="951.59" font-size="17.00" text-anchor="middle">TII Subcarrier</text>
<text x="972.00" y="819.80" font-size="14.80" text-anchor="middle" font-weight="bold" transform="rotate(-90 972.00 814.50)">Magnitude</text>
</svg>
</div></body></html>
